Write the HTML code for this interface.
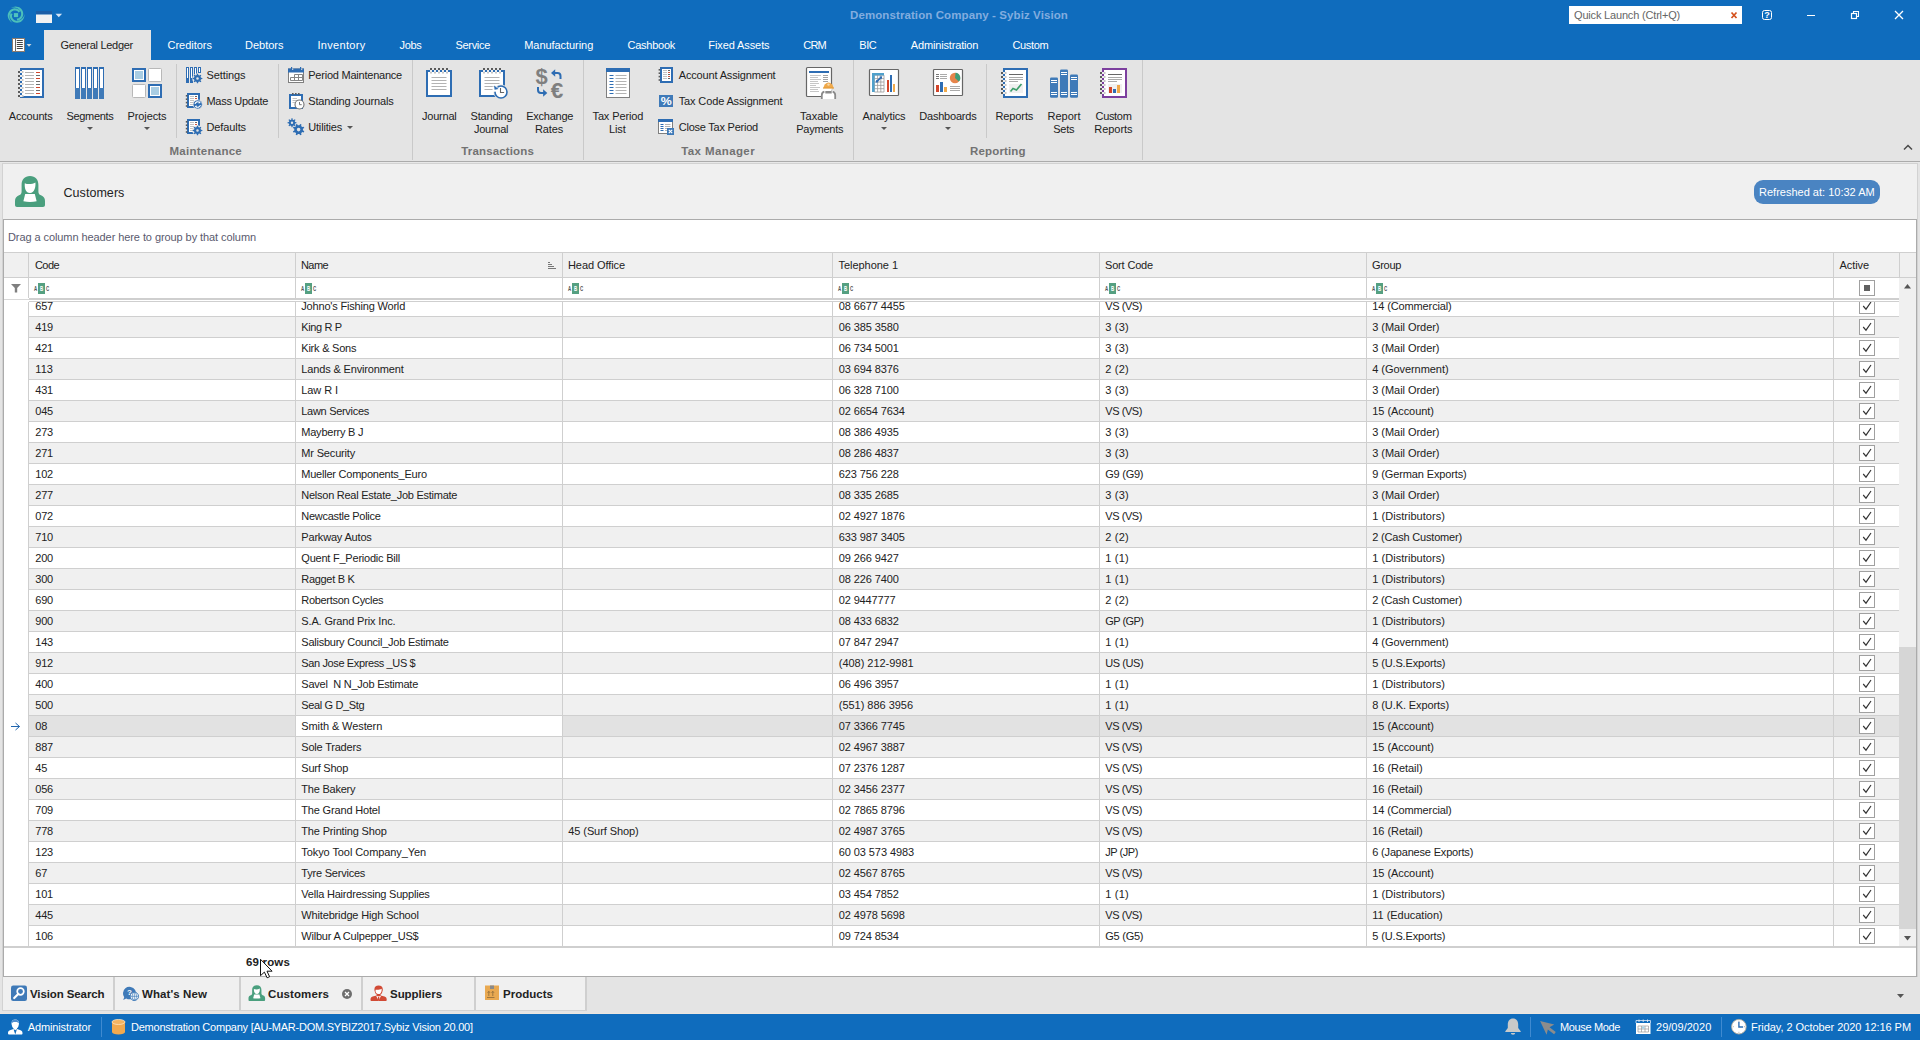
<!DOCTYPE html>
<html lang="en"><head><meta charset="utf-8"><title>Demonstration Company - Sybiz Vision</title>
<style>
html,body{margin:0;padding:0}
body{width:1920px;height:1040px;overflow:hidden;position:relative;background:#e4e4e4;font-family:'Liberation Sans', sans-serif;font-size:11px;line-height:14px;color:#222}
.a{position:absolute}
.t{position:absolute;white-space:pre;height:14px}
svg{position:absolute;overflow:visible}

</style></head><body>
<div class="a" style="left:0px;top:0px;width:1920px;height:60px;background:#0f6cbd;"></div>
<div class="a" style="left:44px;top:30px;width:107px;height:30px;background:#e4e4e4;"></div>
<div class="a" style="left:1569px;top:6px;width:173px;height:18px;background:#fff;"></div>
<div class="a" style="left:0px;top:60px;width:1920px;height:101px;background:#e4e4e4;"></div>
<div class="a" style="left:0px;top:161px;width:1920px;height:1px;background:#ababab;"></div>
<div class="a" style="left:0px;top:162px;width:1920px;height:1px;background:#e8e8e8;"></div>
<div class="a" style="left:412px;top:60px;width:1px;height:100px;background:#c9c9c9;"></div>
<div class="a" style="left:583px;top:60px;width:1px;height:100px;background:#c9c9c9;"></div>
<div class="a" style="left:853px;top:60px;width:1px;height:100px;background:#c9c9c9;"></div>
<div class="a" style="left:1142px;top:60px;width:1px;height:100px;background:#c9c9c9;"></div>
<div class="a" style="left:176px;top:64px;width:1px;height:74px;background:#c9c9c9;"></div>
<div class="a" style="left:278px;top:64px;width:1px;height:74px;background:#c9c9c9;"></div>
<div class="a" style="left:986px;top:64px;width:1px;height:74px;background:#c9c9c9;"></div>
<svg style="left:87px;top:127px" width="6" height="3" viewBox="0 0 6 3"><path d="M0 0h6L3 3z" fill="#555"/></svg>
<svg style="left:144px;top:127px" width="6" height="3" viewBox="0 0 6 3"><path d="M0 0h6L3 3z" fill="#555"/></svg>
<svg style="left:881px;top:127px" width="6" height="3" viewBox="0 0 6 3"><path d="M0 0h6L3 3z" fill="#555"/></svg>
<svg style="left:945px;top:127px" width="6" height="3" viewBox="0 0 6 3"><path d="M0 0h6L3 3z" fill="#555"/></svg>
<svg style="left:347px;top:126px" width="6" height="3" viewBox="0 0 6 3"><path d="M0 0h6L3 3z" fill="#555"/></svg>
<div class="a" style="left:2px;top:163px;width:1916px;height:814px;background:#f0f0f0;box-sizing:border-box;border:1px solid #d2d2d2;border-bottom:none;"></div>
<div class="a" style="left:1754px;top:180px;width:126px;height:24px;border-radius:9px;background:#4a84c2"></div>
<div class="a" style="left:3px;top:219px;width:1914px;height:758px;background:#fff;box-sizing:border-box;border:1px solid #ababab;"></div>
<div class="a" style="left:4px;top:252px;width:1912px;height:1px;background:#cfcfcf;"></div>
<div class="a" style="left:4px;top:253px;width:1912px;height:24px;background:#f0f0f0;"></div>
<div class="a" style="left:4px;top:277px;width:1912px;height:1px;background:#cfcfcf;"></div>
<div class="a" style="left:28px;top:253px;width:1px;height:24px;background:#cfcfcf;"></div>
<div class="a" style="left:295px;top:253px;width:1px;height:24px;background:#cfcfcf;"></div>
<div class="a" style="left:562px;top:253px;width:1px;height:24px;background:#cfcfcf;"></div>
<div class="a" style="left:832px;top:253px;width:1px;height:24px;background:#cfcfcf;"></div>
<div class="a" style="left:1099px;top:253px;width:1px;height:24px;background:#cfcfcf;"></div>
<div class="a" style="left:1366px;top:253px;width:1px;height:24px;background:#cfcfcf;"></div>
<div class="a" style="left:1833px;top:253px;width:1px;height:24px;background:#cfcfcf;"></div>
<div class="a" style="left:1899px;top:253px;width:1px;height:24px;background:#cfcfcf;"></div>
<div class="a" style="left:28px;top:278px;width:1px;height:20px;background:#cfcfcf;"></div>
<div class="a" style="left:295px;top:278px;width:1px;height:20px;background:#cfcfcf;"></div>
<div class="a" style="left:562px;top:278px;width:1px;height:20px;background:#cfcfcf;"></div>
<div class="a" style="left:832px;top:278px;width:1px;height:20px;background:#cfcfcf;"></div>
<div class="a" style="left:1099px;top:278px;width:1px;height:20px;background:#cfcfcf;"></div>
<div class="a" style="left:1366px;top:278px;width:1px;height:20px;background:#cfcfcf;"></div>
<div class="a" style="left:1833px;top:278px;width:1px;height:20px;background:#cfcfcf;"></div>
<div class="a" style="left:29px;top:298px;width:1870px;height:2px;background:#cfcfcf;"></div>
<div class="a" style="left:29px;top:301px;width:1870px;height:1px;background:#cfcfcf;"></div>
<div class="a" style="left:4px;top:299px;width:25px;height:1px;background:#d8d8d8;"></div>
<div class="a" style="left:29px;top:316px;width:1870px;height:1px;background:#cfcfcf;"></div>
<svg style="left:1859px;top:302px;overflow:hidden" width="16" height="12" viewBox="0 4 16 12"><rect x="0.5" y="0.5" width="15" height="15" fill="#fff" stroke="#a0a0a0"/><path d="M4.2 8l2.8 3.2 5-7.2" fill="none" stroke="#333" stroke-width="1.15"/></svg>
<div class="a" style="left:29px;top:317px;width:1870px;height:20px;background:#f0f0f0;"></div>
<div class="a" style="left:29px;top:337px;width:1870px;height:1px;background:#cfcfcf;"></div>
<svg style="left:1859px;top:319px" width="16" height="16" viewBox="0 0 16 16"><rect x="0.5" y="0.5" width="15" height="15" fill="#fff" stroke="#a0a0a0"/><path d="M4.2 8l2.8 3.2 5-7.2" fill="none" stroke="#333" stroke-width="1.15"/></svg>
<div class="a" style="left:29px;top:358px;width:1870px;height:1px;background:#cfcfcf;"></div>
<svg style="left:1859px;top:340px" width="16" height="16" viewBox="0 0 16 16"><rect x="0.5" y="0.5" width="15" height="15" fill="#fff" stroke="#a0a0a0"/><path d="M4.2 8l2.8 3.2 5-7.2" fill="none" stroke="#333" stroke-width="1.15"/></svg>
<div class="a" style="left:29px;top:359px;width:1870px;height:20px;background:#f0f0f0;"></div>
<div class="a" style="left:29px;top:379px;width:1870px;height:1px;background:#cfcfcf;"></div>
<svg style="left:1859px;top:361px" width="16" height="16" viewBox="0 0 16 16"><rect x="0.5" y="0.5" width="15" height="15" fill="#fff" stroke="#a0a0a0"/><path d="M4.2 8l2.8 3.2 5-7.2" fill="none" stroke="#333" stroke-width="1.15"/></svg>
<div class="a" style="left:29px;top:400px;width:1870px;height:1px;background:#cfcfcf;"></div>
<svg style="left:1859px;top:382px" width="16" height="16" viewBox="0 0 16 16"><rect x="0.5" y="0.5" width="15" height="15" fill="#fff" stroke="#a0a0a0"/><path d="M4.2 8l2.8 3.2 5-7.2" fill="none" stroke="#333" stroke-width="1.15"/></svg>
<div class="a" style="left:29px;top:401px;width:1870px;height:20px;background:#f0f0f0;"></div>
<div class="a" style="left:29px;top:421px;width:1870px;height:1px;background:#cfcfcf;"></div>
<svg style="left:1859px;top:403px" width="16" height="16" viewBox="0 0 16 16"><rect x="0.5" y="0.5" width="15" height="15" fill="#fff" stroke="#a0a0a0"/><path d="M4.2 8l2.8 3.2 5-7.2" fill="none" stroke="#333" stroke-width="1.15"/></svg>
<div class="a" style="left:29px;top:442px;width:1870px;height:1px;background:#cfcfcf;"></div>
<svg style="left:1859px;top:424px" width="16" height="16" viewBox="0 0 16 16"><rect x="0.5" y="0.5" width="15" height="15" fill="#fff" stroke="#a0a0a0"/><path d="M4.2 8l2.8 3.2 5-7.2" fill="none" stroke="#333" stroke-width="1.15"/></svg>
<div class="a" style="left:29px;top:443px;width:1870px;height:20px;background:#f0f0f0;"></div>
<div class="a" style="left:29px;top:463px;width:1870px;height:1px;background:#cfcfcf;"></div>
<svg style="left:1859px;top:445px" width="16" height="16" viewBox="0 0 16 16"><rect x="0.5" y="0.5" width="15" height="15" fill="#fff" stroke="#a0a0a0"/><path d="M4.2 8l2.8 3.2 5-7.2" fill="none" stroke="#333" stroke-width="1.15"/></svg>
<div class="a" style="left:29px;top:484px;width:1870px;height:1px;background:#cfcfcf;"></div>
<svg style="left:1859px;top:466px" width="16" height="16" viewBox="0 0 16 16"><rect x="0.5" y="0.5" width="15" height="15" fill="#fff" stroke="#a0a0a0"/><path d="M4.2 8l2.8 3.2 5-7.2" fill="none" stroke="#333" stroke-width="1.15"/></svg>
<div class="a" style="left:29px;top:485px;width:1870px;height:20px;background:#f0f0f0;"></div>
<div class="a" style="left:29px;top:505px;width:1870px;height:1px;background:#cfcfcf;"></div>
<svg style="left:1859px;top:487px" width="16" height="16" viewBox="0 0 16 16"><rect x="0.5" y="0.5" width="15" height="15" fill="#fff" stroke="#a0a0a0"/><path d="M4.2 8l2.8 3.2 5-7.2" fill="none" stroke="#333" stroke-width="1.15"/></svg>
<div class="a" style="left:29px;top:526px;width:1870px;height:1px;background:#cfcfcf;"></div>
<svg style="left:1859px;top:508px" width="16" height="16" viewBox="0 0 16 16"><rect x="0.5" y="0.5" width="15" height="15" fill="#fff" stroke="#a0a0a0"/><path d="M4.2 8l2.8 3.2 5-7.2" fill="none" stroke="#333" stroke-width="1.15"/></svg>
<div class="a" style="left:29px;top:527px;width:1870px;height:20px;background:#f0f0f0;"></div>
<div class="a" style="left:29px;top:547px;width:1870px;height:1px;background:#cfcfcf;"></div>
<svg style="left:1859px;top:529px" width="16" height="16" viewBox="0 0 16 16"><rect x="0.5" y="0.5" width="15" height="15" fill="#fff" stroke="#a0a0a0"/><path d="M4.2 8l2.8 3.2 5-7.2" fill="none" stroke="#333" stroke-width="1.15"/></svg>
<div class="a" style="left:29px;top:568px;width:1870px;height:1px;background:#cfcfcf;"></div>
<svg style="left:1859px;top:550px" width="16" height="16" viewBox="0 0 16 16"><rect x="0.5" y="0.5" width="15" height="15" fill="#fff" stroke="#a0a0a0"/><path d="M4.2 8l2.8 3.2 5-7.2" fill="none" stroke="#333" stroke-width="1.15"/></svg>
<div class="a" style="left:29px;top:569px;width:1870px;height:20px;background:#f0f0f0;"></div>
<div class="a" style="left:29px;top:589px;width:1870px;height:1px;background:#cfcfcf;"></div>
<svg style="left:1859px;top:571px" width="16" height="16" viewBox="0 0 16 16"><rect x="0.5" y="0.5" width="15" height="15" fill="#fff" stroke="#a0a0a0"/><path d="M4.2 8l2.8 3.2 5-7.2" fill="none" stroke="#333" stroke-width="1.15"/></svg>
<div class="a" style="left:29px;top:610px;width:1870px;height:1px;background:#cfcfcf;"></div>
<svg style="left:1859px;top:592px" width="16" height="16" viewBox="0 0 16 16"><rect x="0.5" y="0.5" width="15" height="15" fill="#fff" stroke="#a0a0a0"/><path d="M4.2 8l2.8 3.2 5-7.2" fill="none" stroke="#333" stroke-width="1.15"/></svg>
<div class="a" style="left:29px;top:611px;width:1870px;height:20px;background:#f0f0f0;"></div>
<div class="a" style="left:29px;top:631px;width:1870px;height:1px;background:#cfcfcf;"></div>
<svg style="left:1859px;top:613px" width="16" height="16" viewBox="0 0 16 16"><rect x="0.5" y="0.5" width="15" height="15" fill="#fff" stroke="#a0a0a0"/><path d="M4.2 8l2.8 3.2 5-7.2" fill="none" stroke="#333" stroke-width="1.15"/></svg>
<div class="a" style="left:29px;top:652px;width:1870px;height:1px;background:#cfcfcf;"></div>
<svg style="left:1859px;top:634px" width="16" height="16" viewBox="0 0 16 16"><rect x="0.5" y="0.5" width="15" height="15" fill="#fff" stroke="#a0a0a0"/><path d="M4.2 8l2.8 3.2 5-7.2" fill="none" stroke="#333" stroke-width="1.15"/></svg>
<div class="a" style="left:29px;top:653px;width:1870px;height:20px;background:#f0f0f0;"></div>
<div class="a" style="left:29px;top:673px;width:1870px;height:1px;background:#cfcfcf;"></div>
<svg style="left:1859px;top:655px" width="16" height="16" viewBox="0 0 16 16"><rect x="0.5" y="0.5" width="15" height="15" fill="#fff" stroke="#a0a0a0"/><path d="M4.2 8l2.8 3.2 5-7.2" fill="none" stroke="#333" stroke-width="1.15"/></svg>
<div class="a" style="left:29px;top:694px;width:1870px;height:1px;background:#cfcfcf;"></div>
<svg style="left:1859px;top:676px" width="16" height="16" viewBox="0 0 16 16"><rect x="0.5" y="0.5" width="15" height="15" fill="#fff" stroke="#a0a0a0"/><path d="M4.2 8l2.8 3.2 5-7.2" fill="none" stroke="#333" stroke-width="1.15"/></svg>
<div class="a" style="left:29px;top:695px;width:1870px;height:20px;background:#f0f0f0;"></div>
<div class="a" style="left:29px;top:715px;width:1870px;height:1px;background:#cfcfcf;"></div>
<svg style="left:1859px;top:697px" width="16" height="16" viewBox="0 0 16 16"><rect x="0.5" y="0.5" width="15" height="15" fill="#fff" stroke="#a0a0a0"/><path d="M4.2 8l2.8 3.2 5-7.2" fill="none" stroke="#333" stroke-width="1.15"/></svg>
<div class="a" style="left:29px;top:716px;width:1870px;height:20px;background:#e2e2e2;"></div>
<div class="a" style="left:296px;top:716px;width:266px;height:20px;background:#fff;"></div>
<div class="a" style="left:29px;top:736px;width:1870px;height:1px;background:#cfcfcf;"></div>
<svg style="left:1859px;top:718px" width="16" height="16" viewBox="0 0 16 16"><rect x="0.5" y="0.5" width="15" height="15" fill="#fff" stroke="#a0a0a0"/><path d="M4.2 8l2.8 3.2 5-7.2" fill="none" stroke="#333" stroke-width="1.15"/></svg>
<div class="a" style="left:29px;top:737px;width:1870px;height:20px;background:#f0f0f0;"></div>
<div class="a" style="left:29px;top:757px;width:1870px;height:1px;background:#cfcfcf;"></div>
<svg style="left:1859px;top:739px" width="16" height="16" viewBox="0 0 16 16"><rect x="0.5" y="0.5" width="15" height="15" fill="#fff" stroke="#a0a0a0"/><path d="M4.2 8l2.8 3.2 5-7.2" fill="none" stroke="#333" stroke-width="1.15"/></svg>
<div class="a" style="left:29px;top:778px;width:1870px;height:1px;background:#cfcfcf;"></div>
<svg style="left:1859px;top:760px" width="16" height="16" viewBox="0 0 16 16"><rect x="0.5" y="0.5" width="15" height="15" fill="#fff" stroke="#a0a0a0"/><path d="M4.2 8l2.8 3.2 5-7.2" fill="none" stroke="#333" stroke-width="1.15"/></svg>
<div class="a" style="left:29px;top:779px;width:1870px;height:20px;background:#f0f0f0;"></div>
<div class="a" style="left:29px;top:799px;width:1870px;height:1px;background:#cfcfcf;"></div>
<svg style="left:1859px;top:781px" width="16" height="16" viewBox="0 0 16 16"><rect x="0.5" y="0.5" width="15" height="15" fill="#fff" stroke="#a0a0a0"/><path d="M4.2 8l2.8 3.2 5-7.2" fill="none" stroke="#333" stroke-width="1.15"/></svg>
<div class="a" style="left:29px;top:820px;width:1870px;height:1px;background:#cfcfcf;"></div>
<svg style="left:1859px;top:802px" width="16" height="16" viewBox="0 0 16 16"><rect x="0.5" y="0.5" width="15" height="15" fill="#fff" stroke="#a0a0a0"/><path d="M4.2 8l2.8 3.2 5-7.2" fill="none" stroke="#333" stroke-width="1.15"/></svg>
<div class="a" style="left:29px;top:821px;width:1870px;height:20px;background:#f0f0f0;"></div>
<div class="a" style="left:29px;top:841px;width:1870px;height:1px;background:#cfcfcf;"></div>
<svg style="left:1859px;top:823px" width="16" height="16" viewBox="0 0 16 16"><rect x="0.5" y="0.5" width="15" height="15" fill="#fff" stroke="#a0a0a0"/><path d="M4.2 8l2.8 3.2 5-7.2" fill="none" stroke="#333" stroke-width="1.15"/></svg>
<div class="a" style="left:29px;top:862px;width:1870px;height:1px;background:#cfcfcf;"></div>
<svg style="left:1859px;top:844px" width="16" height="16" viewBox="0 0 16 16"><rect x="0.5" y="0.5" width="15" height="15" fill="#fff" stroke="#a0a0a0"/><path d="M4.2 8l2.8 3.2 5-7.2" fill="none" stroke="#333" stroke-width="1.15"/></svg>
<div class="a" style="left:29px;top:863px;width:1870px;height:20px;background:#f0f0f0;"></div>
<div class="a" style="left:29px;top:883px;width:1870px;height:1px;background:#cfcfcf;"></div>
<svg style="left:1859px;top:865px" width="16" height="16" viewBox="0 0 16 16"><rect x="0.5" y="0.5" width="15" height="15" fill="#fff" stroke="#a0a0a0"/><path d="M4.2 8l2.8 3.2 5-7.2" fill="none" stroke="#333" stroke-width="1.15"/></svg>
<div class="a" style="left:29px;top:904px;width:1870px;height:1px;background:#cfcfcf;"></div>
<svg style="left:1859px;top:886px" width="16" height="16" viewBox="0 0 16 16"><rect x="0.5" y="0.5" width="15" height="15" fill="#fff" stroke="#a0a0a0"/><path d="M4.2 8l2.8 3.2 5-7.2" fill="none" stroke="#333" stroke-width="1.15"/></svg>
<div class="a" style="left:29px;top:905px;width:1870px;height:20px;background:#f0f0f0;"></div>
<div class="a" style="left:29px;top:925px;width:1870px;height:1px;background:#cfcfcf;"></div>
<svg style="left:1859px;top:907px" width="16" height="16" viewBox="0 0 16 16"><rect x="0.5" y="0.5" width="15" height="15" fill="#fff" stroke="#a0a0a0"/><path d="M4.2 8l2.8 3.2 5-7.2" fill="none" stroke="#333" stroke-width="1.15"/></svg>
<div class="a" style="left:29px;top:946px;width:1870px;height:1px;background:#cfcfcf;"></div>
<svg style="left:1859px;top:928px" width="16" height="16" viewBox="0 0 16 16"><rect x="0.5" y="0.5" width="15" height="15" fill="#fff" stroke="#a0a0a0"/><path d="M4.2 8l2.8 3.2 5-7.2" fill="none" stroke="#333" stroke-width="1.15"/></svg>
<div class="a" style="left:28px;top:302px;width:1px;height:645px;background:#cfcfcf;"></div>
<div class="a" style="left:295px;top:302px;width:1px;height:645px;background:#cfcfcf;"></div>
<div class="a" style="left:562px;top:302px;width:1px;height:645px;background:#cfcfcf;"></div>
<div class="a" style="left:832px;top:302px;width:1px;height:645px;background:#cfcfcf;"></div>
<div class="a" style="left:1099px;top:302px;width:1px;height:645px;background:#cfcfcf;"></div>
<div class="a" style="left:1366px;top:302px;width:1px;height:645px;background:#cfcfcf;"></div>
<div class="a" style="left:1833px;top:302px;width:1px;height:645px;background:#cfcfcf;"></div>
<div class="a" style="left:4px;top:946px;width:1912px;height:2px;background:#cfcfcf;"></div>
<div class="a" style="left:1899px;top:278px;width:17px;height:668px;background:#f0f0f0;"></div>
<div class="a" style="left:1899px;top:647px;width:17px;height:282px;background:#d6d6d6;"></div>
<svg style="left:1904px;top:284px" width="7" height="5" viewBox="0 0 7 5"><path d="M0 4.500h7L3.5 0z" fill="#555"/></svg>
<svg style="left:1904px;top:936px" width="7" height="5" viewBox="0 0 7 5"><path d="M0 0h7L3.5 4.500z" fill="#555"/></svg>
<div class="a" style="left:2px;top:977px;width:585px;height:34px;background:#f0f0f0;box-sizing:border-box;border-left:1px solid #d2d2d2;border-bottom:1px solid #d2d2d2;"></div>
<div class="a" style="left:0px;top:1013px;width:1920px;height:1px;background:#ece6e0;"></div>
<div class="a" style="left:113px;top:977px;width:2px;height:33px;background:#cfcfcf;"></div>
<div class="a" style="left:239px;top:977px;width:2px;height:33px;background:#cfcfcf;"></div>
<div class="a" style="left:361px;top:977px;width:2px;height:33px;background:#cfcfcf;"></div>
<div class="a" style="left:474px;top:977px;width:2px;height:33px;background:#cfcfcf;"></div>
<div class="a" style="left:585px;top:977px;width:2px;height:33px;background:#cfcfcf;"></div>
<svg style="left:1897px;top:994px" width="7" height="4" viewBox="0 0 7 4"><path d="M0 0h7L3.5 4z" fill="#555"/></svg>
<div class="a" style="left:0px;top:1014px;width:1920px;height:26px;background:#0f6cbd;"></div>
<div class="a" style="left:101px;top:1017px;width:1px;height:20px;background:#3f8ad0;"></div>
<div class="a" style="left:1530px;top:1017px;width:1px;height:20px;background:#3f8ad0;"></div>
<div class="a" style="left:1721px;top:1017px;width:1px;height:20px;background:#3f8ad0;"></div>
<svg style="left:0;top:0" width="1920" height="1040" viewBox="0 0 1920 1040"><path d="M10.88 8.21L11.96 7.55L13.12 7.05L14.34 6.73L15.58 6.60L16.83 6.65L18.06 6.89L19.23 7.31L20.29 7.95L21.19 8.79L21.93 9.74L22.51 10.77L22.92 11.85L23.15 12.96L23.21 14.06L23.11 15.14L22.85 16.17L22.45 17.12L21.92 17.98L21.27 18.73L20.54 19.36L19.75 19.86L18.90 20.22L18.04 20.44L17.17 20.53L16.74 18.47L17.30 18.48L17.88 18.39L18.46 18.20L19.03 17.91L19.56 17.52L20.04 17.04L20.45 16.46L20.78 15.81L21.01 15.10L21.13 14.33L21.13 13.53L21.00 12.72L20.75 11.91L20.36 11.13L19.84 10.40L19.20 9.75L18.47 9.12L17.65 8.52L16.70 8.05L15.64 7.72L14.50 7.56L13.31 7.58L12.09 7.79L10.88 8.21Z" fill="#4cc0ba"/><path d="M24.44 13.96L24.47 15.23L24.32 16.48L23.99 17.69L23.48 18.84L22.81 19.90L21.99 20.84L21.04 21.64L19.96 22.24L18.78 22.59L17.59 22.76L16.41 22.75L15.27 22.57L14.20 22.22L13.21 21.72L12.32 21.09L11.56 20.35L10.94 19.52L10.46 18.63L10.13 17.70L9.95 16.75L9.92 15.81L10.03 14.90L10.27 14.04L10.63 13.25L12.62 13.90L12.34 14.39L12.13 14.94L12.00 15.54L11.97 16.17L12.04 16.82L12.22 17.48L12.51 18.12L12.90 18.73L13.41 19.29L14.01 19.78L14.70 20.18L15.47 20.47L16.30 20.65L17.17 20.71L18.06 20.62L18.95 20.40L19.86 20.08L20.79 19.66L21.67 19.08L22.49 18.33L23.19 17.42L23.77 16.38L24.19 15.22L24.44 13.96Z" fill="#4cc0ba"/><path d="M12.68 22.82L11.57 22.23L10.56 21.47L9.67 20.57L8.93 19.56L8.36 18.45L7.95 17.27L7.72 16.05L7.75 14.81L8.03 13.61L8.48 12.50L9.08 11.48L9.81 10.59L10.65 9.83L11.58 9.22L12.57 8.77L13.59 8.48L14.61 8.36L15.62 8.39L16.60 8.57L17.51 8.88L18.34 9.32L19.07 9.87L19.69 10.51L20.20 11.22L18.64 12.62L18.36 12.13L17.99 11.68L17.54 11.27L17.00 10.92L16.40 10.66L15.74 10.48L15.04 10.41L14.31 10.45L13.58 10.61L12.86 10.89L12.16 11.29L11.52 11.81L10.95 12.43L10.47 13.16L10.10 13.97L9.85 14.86L9.67 15.80L9.57 16.81L9.63 17.87L9.87 18.95L10.30 20.02L10.92 21.04L11.71 21.99L12.68 22.82Z" fill="#4cc0ba"/><rect x="13.9" y="13.1" width="4.2" height="4" fill="#50c3be" /><rect x="36" y="11" width="16" height="3.5" fill="#1c5ea6" /><rect x="36" y="14.5" width="16" height="8.5" fill="#f2f2f2" /><path d="M55.5 13.8h6.6l-3.3 3.4z" fill="#d3e3f5"/><rect x="12.5" y="38.5" width="12" height="13" fill="#fff" stroke="#8c7b6e"/><path d="M15.500 39v12" stroke="#666" stroke-width="1"/><path d="M16.8 40.5H22.8" stroke="#444" stroke-width="1"/><path d="M16.8 42.5H22.8" stroke="#444" stroke-width="1"/><path d="M16.8 44.5H22.8" stroke="#444" stroke-width="1"/><path d="M16.8 46.5H22.8" stroke="#444" stroke-width="1"/><path d="M16.8 48.5H22.8" stroke="#444" stroke-width="1"/><path d="M26.5 44h5l-2.5 2.8z" fill="#cfd6de"/><path d="M1731.5 12.5l5 5.5M1736.5 12.5l-5 5.5" stroke="#d4501c" stroke-width="1.7"/><rect x="1762.5" y="10.5" width="9" height="9" rx="2" fill="none" stroke="#fff"/><text x="1767" y="18.300" font-size="9" font-weight="bold" fill="#fff" text-anchor="middle" font-family="Liberation Sans, sans-serif">?</text><path d="M1807 15.5h8" stroke="#fff"/><path d="M1853.5 13v-1.500h5v5h-1.500" fill="none" stroke="#fff" stroke-width="1.100"/><rect x="1851.5" y="13.5" width="5" height="5" fill="none" stroke="#fff" stroke-width="1.2"/><path d="M1895 11l8 8M1903 11l-8 8" stroke="#fff" stroke-width="1.3"/><path d="M1904 149.500l4-4 4 4" fill="none" stroke="#4a4a4a" stroke-width="1.500"/><rect x="20" y="68" width="24" height="30" fill="#2e6db3" /><rect x="22" y="70" width="20" height="26" fill="#fff" /><rect x="20" y="71" width="2" height="2" fill="#ececec" /><rect x="18" y="71" width="2" height="2" fill="#5a5a5a" /><rect x="22" y="71" width="1.5" height="2" fill="#c4c4c4" /><rect x="20" y="75" width="2" height="2" fill="#ececec" /><rect x="18" y="75" width="2" height="2" fill="#5a5a5a" /><rect x="22" y="75" width="1.5" height="2" fill="#c4c4c4" /><rect x="20" y="79" width="2" height="2" fill="#ececec" /><rect x="18" y="79" width="2" height="2" fill="#5a5a5a" /><rect x="22" y="79" width="1.5" height="2" fill="#c4c4c4" /><rect x="20" y="83" width="2" height="2" fill="#ececec" /><rect x="18" y="83" width="2" height="2" fill="#5a5a5a" /><rect x="22" y="83" width="1.5" height="2" fill="#c4c4c4" /><rect x="20" y="87" width="2" height="2" fill="#ececec" /><rect x="18" y="87" width="2" height="2" fill="#5a5a5a" /><rect x="22" y="87" width="1.5" height="2" fill="#c4c4c4" /><rect x="20" y="91" width="2" height="2" fill="#ececec" /><rect x="18" y="91" width="2" height="2" fill="#5a5a5a" /><rect x="22" y="91" width="1.5" height="2" fill="#c4c4c4" /><rect x="20" y="95" width="2" height="2" fill="#ececec" /><rect x="18" y="95" width="2" height="2" fill="#5a5a5a" /><rect x="22" y="95" width="1.5" height="2" fill="#c4c4c4" /><path d="M25 72.5H34" stroke="#b3b3b3"/><path d="M36 72.5H40" stroke="#d2452a"/><path d="M25 75.5H34" stroke="#b3b3b3"/><path d="M36 75.5H40" stroke="#6e6e6e"/><path d="M25 78.5H34" stroke="#b3b3b3"/><path d="M36 78.5H40" stroke="#d2452a"/><path d="M25 81.5H34" stroke="#b3b3b3"/><path d="M36 81.5H40" stroke="#6e6e6e"/><path d="M25 84.5H34" stroke="#b3b3b3"/><path d="M36 84.5H40" stroke="#6e6e6e"/><path d="M25 87.5H34" stroke="#b3b3b3"/><path d="M36 87.5H40" stroke="#d2452a"/><path d="M25 90.5H34" stroke="#b3b3b3"/><path d="M36 90.5H40" stroke="#6e6e6e"/><path d="M25 93.5H34" stroke="#b3b3b3"/><path d="M36 93.5H40" stroke="#d2452a"/><rect x="75" y="67" width="5" height="32" fill="#2e6db3" /><rect x="75" y="88" width="5" height="11" fill="#3f7ab8" /><rect x="76" y="69" width="3" height="19" fill="#fff" /><rect x="81" y="67" width="5" height="32" fill="#2e6db3" /><rect x="81" y="88" width="5" height="11" fill="#3f7ab8" /><rect x="82" y="69" width="3" height="19" fill="#fff" /><rect x="87" y="67" width="5" height="32" fill="#2e6db3" /><rect x="87" y="88" width="5" height="11" fill="#3f7ab8" /><rect x="88" y="69" width="3" height="19" fill="#fff" /><rect x="93" y="67" width="5" height="32" fill="#2e6db3" /><rect x="93" y="88" width="5" height="11" fill="#3f7ab8" /><rect x="94" y="69" width="3" height="19" fill="#fff" /><rect x="99" y="67" width="5" height="32" fill="#2e6db3" /><rect x="99" y="88" width="5" height="11" fill="#3f7ab8" /><rect x="100" y="69" width="3" height="19" fill="#fff" /><rect x="132" y="68" width="14" height="14" fill="#2e6db3" /><rect x="134" y="70" width="10" height="10" fill="#fff" /><rect x="135" y="71" width="8" height="8" fill="#a9cde3" /><rect x="148.5" y="68.5" width="13" height="13" fill="#fff" stroke="#b8b8b8" rx="1"/><rect x="132.5" y="84.5" width="13" height="13" fill="#fff" stroke="#b8b8b8" rx="1"/><rect x="148" y="84" width="14" height="14" fill="#2e6db3" /><rect x="150" y="86" width="10" height="10" fill="#fff" /><rect x="151" y="87" width="8" height="8" fill="#a9cde3" /><rect x="186" y="67" width="3" height="16" fill="#2e6db3" /><rect x="187" y="68" width="1" height="10" fill="#fff" /><rect x="190" y="67" width="3" height="16" fill="#2e6db3" /><rect x="191" y="68" width="1" height="10" fill="#fff" /><rect x="194" y="67" width="3" height="8" fill="#2e6db3" /><rect x="195" y="68" width="1" height="6" fill="#fff" /><rect x="198" y="67" width="3" height="6" fill="#2e6db3" /><rect x="199" y="68" width="1" height="4" fill="#fff" /><circle cx="197.5" cy="78.5" r="5.3" fill="#e4e4e4"/><path d="M201.02 77.73L202.36 77.89L202.36 79.11L201.02 79.27L200.53 80.44L201.37 81.50L200.50 82.37L199.44 81.53L198.27 82.02L198.11 83.36L196.89 83.36L196.73 82.02L195.56 81.53L194.50 82.37L193.63 81.50L194.47 80.44L193.98 79.27L192.64 79.11L192.64 77.89L193.98 77.73L194.47 76.56L193.63 75.50L194.50 74.63L195.56 75.47L196.73 74.98L196.89 73.64L198.11 73.64L198.27 74.98L199.44 75.47L200.50 74.63L201.37 75.50L200.53 76.56ZM196.20 78.50a1.30 1.30 0 1 0 2.60 0a1.30 1.30 0 1 0 -2.60 0Z" fill="#2e6db3" fill-rule="evenodd"/><rect x="187" y="93" width="13" height="15" fill="#2e6db3" /><rect x="189" y="95" width="9" height="11" fill="#fff" /><rect x="185.8" y="95" width="1.6" height="1.6" fill="#5a5a5a" /><rect x="185.8" y="98.4" width="1.6" height="1.6" fill="#5a5a5a" /><rect x="185.8" y="101.8" width="1.6" height="1.6" fill="#5a5a5a" /><rect x="185.8" y="105.2" width="1.6" height="1.6" fill="#5a5a5a" /><path d="M190 96.5H194" stroke="#b3b3b3" stroke-width="0.8"/><path d="M195 96.5H197" stroke="#555" stroke-width="0.9"/><path d="M190 98.5H194" stroke="#b3b3b3" stroke-width="0.8"/><path d="M195 98.5H197" stroke="#d2452a" stroke-width="0.9"/><path d="M190 100.5H194" stroke="#b3b3b3" stroke-width="0.8"/><path d="M190 102.5H194" stroke="#b3b3b3" stroke-width="0.8"/><path d="M190 104.5H194" stroke="#b3b3b3" stroke-width="0.8"/><circle cx="197.7" cy="104.5" r="4.6" fill="#2e6db3" stroke="#e4e4e4" stroke-width="0.8"/><path d="M195 104a2.8 2.8 0 0 1 4.6-1.6M200.4 105a2.8 2.8 0 0 1-4.6 1.6" fill="none" stroke="#fff" stroke-width="1.1"/><path d="M199.2 101.2l1.6 1.9-2.3 0.4zM196.2 107.8l-1.6-1.9 2.3-0.4z" fill="#fff"/><rect x="187" y="119" width="13" height="15" fill="#2e6db3" /><rect x="189" y="121" width="9" height="11" fill="#fff" /><rect x="185.8" y="121" width="1.6" height="1.6" fill="#5a5a5a" /><rect x="185.8" y="124.4" width="1.6" height="1.6" fill="#5a5a5a" /><rect x="185.8" y="127.8" width="1.6" height="1.6" fill="#5a5a5a" /><rect x="185.8" y="131.2" width="1.6" height="1.6" fill="#5a5a5a" /><path d="M190 122.5H194" stroke="#b3b3b3" stroke-width="0.8"/><path d="M195 122.5H197" stroke="#555" stroke-width="0.9"/><path d="M190 124.5H194" stroke="#b3b3b3" stroke-width="0.8"/><path d="M195 124.5H197" stroke="#d2452a" stroke-width="0.9"/><path d="M190 126.5H194" stroke="#b3b3b3" stroke-width="0.8"/><path d="M190 128.5H194" stroke="#b3b3b3" stroke-width="0.8"/><path d="M190 130.5H194" stroke="#b3b3b3" stroke-width="0.8"/><circle cx="197.5" cy="130.5" r="5.2" fill="#e4e4e4"/><path d="M201.02 129.73L202.36 129.89L202.36 131.11L201.02 131.27L200.53 132.44L201.37 133.50L200.50 134.37L199.44 133.53L198.27 134.02L198.11 135.36L196.89 135.36L196.73 134.02L195.56 133.53L194.50 134.37L193.63 133.50L194.47 132.44L193.98 131.27L192.64 131.11L192.64 129.89L193.98 129.73L194.47 128.56L193.63 127.50L194.50 126.63L195.56 127.47L196.73 126.98L196.89 125.64L198.11 125.64L198.27 126.98L199.44 127.47L200.50 126.63L201.37 127.50L200.53 128.56ZM196.20 130.50a1.30 1.30 0 1 0 2.60 0a1.30 1.30 0 1 0 -2.60 0Z" fill="#2e6db3" fill-rule="evenodd"/><rect x="288.5" y="69" width="15" height="13.5" fill="#fff" stroke="#7f7f7f"/><rect x="288" y="68.5" width="16" height="4" fill="#2e6db3" /><rect x="291" y="67" width="1.2" height="3" fill="#2e6db3" /><rect x="300" y="67" width="1.2" height="3" fill="#2e6db3" /><rect x="292.2" y="68.5" width="1" height="1.5" fill="#e4e4e4" /><rect x="301.2" y="68.5" width="1" height="1.5" fill="#e4e4e4" /><path d="M294.500 74.500h8v6h-12v-3h12M294.500 74.500v6M298.500 74.500v6" fill="none" stroke="#858585" stroke-width="1"/><rect x="289" y="94" width="14" height="15" fill="#2e6db3" /><rect x="291" y="96" width="10" height="11" fill="#fff" /><rect x="292" y="93" width="1.6" height="1.6" fill="#5a5a5a" /><rect x="295" y="93" width="1.6" height="1.6" fill="#5a5a5a" /><rect x="298" y="93" width="1.6" height="1.6" fill="#5a5a5a" /><path d="M292.5 98.5H297" stroke="#b3b3b3" stroke-width="0.8"/><path d="M292.5 100.5H297" stroke="#b3b3b3" stroke-width="0.8"/><path d="M292.5 102.5H297" stroke="#b3b3b3" stroke-width="0.8"/><circle cx="299.500" cy="104.500" r="4.500" fill="#fff" stroke="#727272" stroke-width="1.100"/><path d="M299.5 102v2.7h2.2" fill="none" stroke="#666" stroke-width="0.9"/><path d="M295.13 122.11L296.46 122.24L296.46 123.36L295.13 123.49L294.70 124.53L295.56 125.56L294.76 126.36L293.73 125.50L292.69 125.93L292.56 127.26L291.44 127.26L291.31 125.93L290.27 125.50L289.24 126.36L288.44 125.56L289.30 124.53L288.87 123.49L287.54 123.36L287.54 122.24L288.87 122.11L289.30 121.07L288.44 120.04L289.24 119.24L290.27 120.10L291.31 119.67L291.44 118.34L292.56 118.34L292.69 119.67L293.73 120.10L294.76 119.24L295.56 120.04L294.70 121.07ZM290.80 122.80a1.20 1.20 0 1 0 2.40 0a1.20 1.20 0 1 0 -2.40 0Z" fill="#2e6db3" fill-rule="evenodd"/><path d="M302.93 130.36L304.30 131.14L303.73 132.51L302.22 132.11L301.13 133.20L301.54 134.72L300.17 135.29L299.39 133.93L297.84 133.93L297.06 135.30L295.69 134.73L296.09 133.22L295.00 132.13L293.48 132.54L292.91 131.17L294.27 130.39L294.27 128.84L292.90 128.06L293.47 126.69L294.98 127.09L296.07 126.00L295.66 124.48L297.03 123.91L297.81 125.27L299.36 125.27L300.14 123.90L301.51 124.47L301.11 125.98L302.20 127.07L303.72 126.66L304.29 128.03L302.93 128.81ZM296.80 129.60a1.80 1.80 0 1 0 3.60 0a1.80 1.80 0 1 0 -3.60 0Z" fill="#2e6db3" fill-rule="evenodd"/><rect x="426" y="70" width="26" height="27" fill="#2e6db3" /><rect x="428" y="72" width="22" height="23" fill="#fff" /><rect x="430" y="70" width="2" height="2" fill="#ececec" /><rect x="430" y="68" width="2" height="2" fill="#5a5a5a" /><rect x="430" y="72" width="2" height="1.5" fill="#c4c4c4" /><rect x="434" y="70" width="2" height="2" fill="#ececec" /><rect x="434" y="68" width="2" height="2" fill="#5a5a5a" /><rect x="434" y="72" width="2" height="1.5" fill="#c4c4c4" /><rect x="438" y="70" width="2" height="2" fill="#ececec" /><rect x="438" y="68" width="2" height="2" fill="#5a5a5a" /><rect x="438" y="72" width="2" height="1.5" fill="#c4c4c4" /><rect x="442" y="70" width="2" height="2" fill="#ececec" /><rect x="442" y="68" width="2" height="2" fill="#5a5a5a" /><rect x="442" y="72" width="2" height="1.5" fill="#c4c4c4" /><rect x="446" y="70" width="2" height="2" fill="#ececec" /><rect x="446" y="68" width="2" height="2" fill="#5a5a5a" /><rect x="446" y="72" width="2" height="1.5" fill="#c4c4c4" /><path d="M431.5 77.5H446.5" stroke="#b3b3b3" stroke-width="1"/><path d="M431.5 80.5H446.5" stroke="#b3b3b3" stroke-width="1"/><path d="M431.5 83.5H446.5" stroke="#b3b3b3" stroke-width="1"/><path d="M431.5 86.5H446.5" stroke="#b3b3b3" stroke-width="1"/><path d="M431.5 89.5H446.5" stroke="#b3b3b3" stroke-width="1"/><rect x="479" y="70" width="26" height="27" fill="#2e6db3" /><rect x="481" y="72" width="22" height="23" fill="#fff" /><rect x="483" y="70" width="2" height="2" fill="#ececec" /><rect x="483" y="68" width="2" height="2" fill="#5a5a5a" /><rect x="483" y="72" width="2" height="1.5" fill="#c4c4c4" /><rect x="487" y="70" width="2" height="2" fill="#ececec" /><rect x="487" y="68" width="2" height="2" fill="#5a5a5a" /><rect x="487" y="72" width="2" height="1.5" fill="#c4c4c4" /><rect x="491" y="70" width="2" height="2" fill="#ececec" /><rect x="491" y="68" width="2" height="2" fill="#5a5a5a" /><rect x="491" y="72" width="2" height="1.5" fill="#c4c4c4" /><rect x="495" y="70" width="2" height="2" fill="#ececec" /><rect x="495" y="68" width="2" height="2" fill="#5a5a5a" /><rect x="495" y="72" width="2" height="1.5" fill="#c4c4c4" /><rect x="499" y="70" width="2" height="2" fill="#ececec" /><rect x="499" y="68" width="2" height="2" fill="#5a5a5a" /><rect x="499" y="72" width="2" height="1.5" fill="#c4c4c4" /><path d="M484.5 77.5H499.5" stroke="#b3b3b3" stroke-width="1"/><path d="M484.5 80.5H499.5" stroke="#b3b3b3" stroke-width="1"/><path d="M484.5 83.5H499.5" stroke="#b3b3b3" stroke-width="1"/><path d="M484.5 86.5H499.5" stroke="#b3b3b3" stroke-width="1"/><path d="M484.5 89.5H499.5" stroke="#b3b3b3" stroke-width="1"/><circle cx="501" cy="92" r="7.6" fill="#e4e4e4"/><circle cx="501" cy="92" r="6" fill="#fff" stroke="#2e6db3" stroke-width="1.6"/><rect x="492.5" y="86.5" width="5" height="5.2" fill="#fff" /><path d="M494 85.5l0.6 4.2 4-0.8z" fill="#2e6db3"/><path d="M500.5 88v4.5h3.6" fill="none" stroke="#666" stroke-width="1.1"/><text x="541.5" y="84" font-size="22" font-weight="bold" fill="#7f7f7f" text-anchor="middle" font-family="Liberation Sans, sans-serif">$</text><text x="557" y="97.8" font-size="22.5" font-weight="bold" fill="#7f7f7f" text-anchor="middle" font-family="Liberation Sans, sans-serif">€</text><path d="M554 73h3.5a3 3 0 0 1 3 3v3" fill="none" stroke="#2e6db3" stroke-width="2"/><path d="M551 73l4.2-3.8v7.6z" fill="#2e6db3"/><path d="M538 87v3a3 3 0 0 0 3 3h3" fill="none" stroke="#2e6db3" stroke-width="2"/><path d="M547.3 93l-4.2-3.8v7.6z" fill="#2e6db3"/><rect x="606.5" y="68.5" width="23" height="29" fill="#fff" stroke="#7f7f7f"/><rect x="606" y="68" width="24" height="4" fill="#2e6db3" /><path d="M609.5 75.5H613.5" stroke="#2e6db3" stroke-width="1"/><path d="M609.5 78.5H613.5" stroke="#2e6db3" stroke-width="1"/><path d="M609.5 81.5H613.5" stroke="#2e6db3" stroke-width="1"/><path d="M609.5 84.5H613.5" stroke="#2e6db3" stroke-width="1"/><path d="M609.5 87.5H613.5" stroke="#2e6db3" stroke-width="1"/><path d="M609.5 90.5H613.5" stroke="#2e6db3" stroke-width="1"/><path d="M609.5 93.5H613.5" stroke="#2e6db3" stroke-width="1"/><path d="M615.5 75.5H626.5" stroke="#b3b3b3" stroke-width="1"/><path d="M615.5 78.5H626.5" stroke="#b3b3b3" stroke-width="1"/><path d="M615.5 81.5H626.5" stroke="#b3b3b3" stroke-width="1"/><path d="M615.5 84.5H626.5" stroke="#b3b3b3" stroke-width="1"/><path d="M615.5 87.5H626.5" stroke="#b3b3b3" stroke-width="1"/><path d="M615.5 90.5H626.5" stroke="#b3b3b3" stroke-width="1"/><path d="M615.5 93.5H626.5" stroke="#b3b3b3" stroke-width="1"/><rect x="660" y="67" width="13" height="16" fill="#2e6db3" /><rect x="662" y="69" width="9" height="12" fill="#fff" /><rect x="658.6" y="69" width="1.6" height="1.6" fill="#5a5a5a" /><rect x="658.6" y="72.4" width="1.6" height="1.6" fill="#5a5a5a" /><rect x="658.6" y="75.8" width="1.6" height="1.6" fill="#5a5a5a" /><rect x="658.6" y="79.2" width="1.6" height="1.6" fill="#5a5a5a" /><path d="M663 70.5H667" stroke="#b3b3b3" stroke-width="0.8"/><path d="M668 70.5H670" stroke="#555" stroke-width="0.9"/><path d="M663 72.5H667" stroke="#b3b3b3" stroke-width="0.8"/><path d="M668 72.5H670" stroke="#d2452a" stroke-width="0.9"/><path d="M663 74.5H667" stroke="#b3b3b3" stroke-width="0.8"/><path d="M668 74.5H670" stroke="#555" stroke-width="0.9"/><path d="M663 76.5H667" stroke="#b3b3b3" stroke-width="0.8"/><path d="M668 76.5H670" stroke="#d2452a" stroke-width="0.9"/><path d="M663 78.5H667" stroke="#b3b3b3" stroke-width="0.8"/><path d="M668 78.5H670" stroke="#555" stroke-width="0.9"/><rect x="659" y="95" width="14" height="12" fill="#3f7ab8" /><text x="660.800" y="105.400" font-size="11.500" font-weight="bold" fill="#fff" textLength="11" lengthAdjust="spacingAndGlyphs" font-family="Liberation Sans, sans-serif">%</text><rect x="658.5" y="119.5" width="14" height="14" fill="#fff" stroke="#7f7f7f"/><rect x="658" y="119" width="15" height="3" fill="#2e6db3" /><path d="M660.5 124.5H663.5" stroke="#2e6db3" stroke-width="1"/><path d="M660.5 126.5H663.5" stroke="#2e6db3" stroke-width="1"/><path d="M660.5 128.5H663.5" stroke="#2e6db3" stroke-width="1"/><path d="M660.5 130.5H663.5" stroke="#2e6db3" stroke-width="1"/><path d="M665 124.5H670.5" stroke="#b3b3b3" stroke-width="1"/><path d="M665 126.5H670.5" stroke="#b3b3b3" stroke-width="1"/><path d="M665 128.5H670.5" stroke="#b3b3b3" stroke-width="1"/><path d="M665 130.5H670.5" stroke="#b3b3b3" stroke-width="1"/><rect x="667" y="128" width="7" height="7" fill="#3f7ab8" /><path d="M668.8 129.8l3.4 3.4M672.2 129.8l-3.4 3.4" stroke="#fff" stroke-width="1.1"/><rect x="806.5" y="67.5" width="25" height="29" fill="#fff" stroke="#666" stroke-width="1.2" rx="1"/><rect x="809" y="71" width="20" height="2" fill="#2e6db3" /><path d="M810 75.5H821" stroke="#c0c0c0" stroke-width="0.9"/><path d="M810 77.5H818" stroke="#c0c0c0" stroke-width="0.9"/><path d="M810 79.5H821" stroke="#c0c0c0" stroke-width="0.9"/><path d="M810 81.5H818" stroke="#c0c0c0" stroke-width="0.9"/><path d="M810 83.5H819" stroke="#c0c0c0" stroke-width="0.9"/><path d="M810 85.5H816" stroke="#c0c0c0" stroke-width="0.9"/><path d="M810 87.5H820" stroke="#c0c0c0" stroke-width="0.9"/><path d="M810 89.5H818" stroke="#c0c0c0" stroke-width="0.9"/><path d="M810 91.5H819" stroke="#c0c0c0" stroke-width="0.9"/><path d="M823 75.5H828" stroke="#999" stroke-width="0.9"/><path d="M823 77.5H828" stroke="#999" stroke-width="0.9"/><path d="M823 79.5H828" stroke="#999" stroke-width="0.9"/><path d="M823 81.5H828" stroke="#999" stroke-width="0.9"/><path d="M821 99v-4.5a4 4 0 0 1 4-4h7a4 4 0 0 1 4 4v4.5z" fill="#fff"/><path d="M821.8 99v-4a3.5 3.5 0 0 1 2.6-3.4M835.2 99v-4a3.5 3.5 0 0 0-2.6-3.4" fill="none" stroke="#8a8a8a" stroke-width="1.8"/><circle cx="828.5" cy="88" r="3.6" fill="#fff"/><path d="M825.3 91h6.4v2.5h-6.4z" fill="#8a8a8a"/><path d="M823.6 88a4.9 5.4 0 0 1 9.8 0z" fill="#f0a94a"/><path d="M823 88h11" stroke="#e39a36" stroke-width="1.2"/><circle cx="828.5" cy="84.6" r="1.2" fill="#f7d9a8"/><rect x="869.5" y="69.5" width="29" height="26" fill="#fff" stroke="#666" stroke-width="1.2" rx="0.8"/><rect x="872" y="73" width="12" height="19" fill="#fff" /><path d="M874.4 75.200h9.600v16.800h-9.600zM877.600 75v17M880.800 75v17M874.400 78.600h9.600M874.400 82h9.600M874.400 85.400h9.600M874.400 88.700h9.600" fill="none" stroke="#9a9a9a" stroke-width="0.800"/><rect x="872" y="73" width="12" height="2.4" fill="#4fa0cb" /><rect x="872" y="73" width="2.6" height="19" fill="#4fa0cb" /><path d="M876.8 81.6l4.2-4.2" stroke="#2e6db3" stroke-width="1.6"/><path d="M882.2 76.2l-3 0.5 2.5 2.5zM875.6 82.8l3-0.5-2.5-2.5z" fill="#2e6db3"/><rect x="887" y="80" width="2" height="12" fill="#d2452a" /><rect x="890" y="75" width="2" height="17" fill="#2e6db3" /><rect x="893" y="84" width="2" height="8" fill="#f0a94a" /><rect x="933.5" y="69.5" width="29" height="26" fill="#fff" stroke="#666" stroke-width="1.2" rx="0.8"/><path d="M936 74.5H939" stroke="#777" stroke-width="1"/><path d="M936 76.5H939" stroke="#777" stroke-width="1"/><path d="M936 78.5H939" stroke="#777" stroke-width="1"/><path d="M940 74.5H947" stroke="#aaa" stroke-width="1"/><path d="M940 76.5H947" stroke="#aaa" stroke-width="1"/><path d="M940 78.5H947" stroke="#aaa" stroke-width="1"/><circle cx="955" cy="78" r="5.2" fill="#e6854c"/><path d="M955 78L955.6 72.8A5.2 5.2 0 0 1 958.8 81.6z" fill="#3d9e7a"/><rect x="936" y="85" width="3" height="7" fill="#d2452a" /><rect x="940" y="82" width="3" height="10" fill="#2e6db3" /><rect x="944" y="87" width="3" height="5" fill="#f0a94a" /><path d="M950 86.5H960" stroke="#aaa" stroke-width="1"/><path d="M950 88.5H960" stroke="#aaa" stroke-width="1"/><path d="M950 90.5H960" stroke="#aaa" stroke-width="1"/><rect x="1003" y="68" width="25" height="30" fill="#2e6db3" /><rect x="1005" y="70" width="21" height="26" fill="#fff" /><rect x="1003" y="72" width="2" height="2" fill="#ececec" /><rect x="1001" y="72" width="2" height="2" fill="#5a5a5a" /><rect x="1005" y="72" width="1.5" height="2" fill="#c4c4c4" /><rect x="1003" y="76" width="2" height="2" fill="#ececec" /><rect x="1001" y="76" width="2" height="2" fill="#5a5a5a" /><rect x="1005" y="76" width="1.5" height="2" fill="#c4c4c4" /><rect x="1003" y="80" width="2" height="2" fill="#ececec" /><rect x="1001" y="80" width="2" height="2" fill="#5a5a5a" /><rect x="1005" y="80" width="1.5" height="2" fill="#c4c4c4" /><rect x="1003" y="84" width="2" height="2" fill="#ececec" /><rect x="1001" y="84" width="2" height="2" fill="#5a5a5a" /><rect x="1005" y="84" width="1.5" height="2" fill="#c4c4c4" /><rect x="1003" y="88" width="2" height="2" fill="#ececec" /><rect x="1001" y="88" width="2" height="2" fill="#5a5a5a" /><rect x="1005" y="88" width="1.5" height="2" fill="#c4c4c4" /><rect x="1003" y="92" width="2" height="2" fill="#ececec" /><rect x="1001" y="92" width="2" height="2" fill="#5a5a5a" /><rect x="1005" y="92" width="1.5" height="2" fill="#c4c4c4" /><path d="M1009 74.5H1023" stroke="#666" stroke-width="1"/><path d="M1009 77.5H1023" stroke="#aaa" stroke-width="1"/><path d="M1009 79.5H1023" stroke="#aaa" stroke-width="1"/><path d="M1009 81.5H1018" stroke="#aaa" stroke-width="1"/><rect x="1009" y="84" width="14" height="9" fill="#f0f0f0" /><path d="M1010.5 91.5l2.5-3 3.5 1.5 5-6" fill="none" stroke="#3d9e6a" stroke-width="1.6"/><rect x="1050" y="77.5" width="8" height="20.3" rx="1.3" fill="#3f7ab8"/><path d="M1051 80.5H1057" stroke="#fff" stroke-width="1"/><path d="M1051 82.5H1057" stroke="#fff" stroke-width="1"/><path d="M1051 92.5H1057" stroke="#fff" stroke-width="1"/><path d="M1051 94.5H1057" stroke="#fff" stroke-width="1"/><rect x="1060" y="69.5" width="8" height="28.3" rx="1.3" fill="#3f7ab8"/><path d="M1061 72.5H1067" stroke="#fff" stroke-width="1"/><path d="M1061 74.5H1067" stroke="#fff" stroke-width="1"/><path d="M1061 92.5H1067" stroke="#fff" stroke-width="1"/><path d="M1061 94.5H1067" stroke="#fff" stroke-width="1"/><rect x="1070" y="74.5" width="8" height="23.3" rx="1.3" fill="#3f7ab8"/><path d="M1071 77.5H1077" stroke="#fff" stroke-width="1"/><path d="M1071 79.5H1077" stroke="#fff" stroke-width="1"/><path d="M1071 92.5H1077" stroke="#fff" stroke-width="1"/><path d="M1071 94.5H1077" stroke="#fff" stroke-width="1"/><rect x="1102" y="68" width="25" height="30" fill="#7c3f9e" /><rect x="1104" y="70" width="21" height="26" fill="#fff" /><rect x="1102" y="72" width="2" height="2" fill="#ececec" /><rect x="1100" y="72" width="2" height="2" fill="#5a5a5a" /><rect x="1104" y="72" width="1.5" height="2" fill="#c4c4c4" /><rect x="1102" y="76" width="2" height="2" fill="#ececec" /><rect x="1100" y="76" width="2" height="2" fill="#5a5a5a" /><rect x="1104" y="76" width="1.5" height="2" fill="#c4c4c4" /><rect x="1102" y="80" width="2" height="2" fill="#ececec" /><rect x="1100" y="80" width="2" height="2" fill="#5a5a5a" /><rect x="1104" y="80" width="1.5" height="2" fill="#c4c4c4" /><rect x="1102" y="84" width="2" height="2" fill="#ececec" /><rect x="1100" y="84" width="2" height="2" fill="#5a5a5a" /><rect x="1104" y="84" width="1.5" height="2" fill="#c4c4c4" /><rect x="1102" y="88" width="2" height="2" fill="#ececec" /><rect x="1100" y="88" width="2" height="2" fill="#5a5a5a" /><rect x="1104" y="88" width="1.5" height="2" fill="#c4c4c4" /><rect x="1102" y="92" width="2" height="2" fill="#ececec" /><rect x="1100" y="92" width="2" height="2" fill="#5a5a5a" /><rect x="1104" y="92" width="1.5" height="2" fill="#c4c4c4" /><path d="M1108 74.5H1122" stroke="#666" stroke-width="1"/><path d="M1108 77.5H1122" stroke="#aaa" stroke-width="1"/><path d="M1108 79.5H1122" stroke="#aaa" stroke-width="1"/><path d="M1108 81.5H1117" stroke="#aaa" stroke-width="1"/><rect x="1108" y="84" width="14" height="9" fill="#f0f0f0" /><rect x="1109" y="87" width="3" height="6" fill="#d2452a" /><rect x="1113" y="89" width="3" height="4" fill="#2e6db3" /><rect x="1117" y="85" width="3" height="8" fill="#f0a94a" /><g transform="translate(15 176) scale(1)"><path d="M15 0C9.6 0 6.6 3.6 6.6 9v6.5c0 2-0.8 3.2-2.6 3.8C1.4 20.2 0 22.2 0 25v4c0 1.2 0.8 2 2 2h26c1.2 0 2-0.8 2-2v-4c0-2.8-1.400-4.8-4-5.700-1.800-0.600-2.600-1.800-2.600-3.800V9C23.400 3.600 20.400 0 15 0z" fill="#4a9f7e"/><path d="M9.8 7.2c2.600 1.400 7.600 1.200 10.600-0.800 0.500 4.800-1.200 10.600-5.400 10.600S9.300 12 9.800 7.200z" fill="#fff"/><path d="M10.2 18h9.600l1.800 7.200c-4 1-9 1-13.200 0z" fill="#fff"/></g><path d="M548 262.500h2M548 264.500h4M548 266.500h6M548 268.500h8" stroke="#777" stroke-width="1" fill="none"/><path d="M11 284h10l-3.8 4v4.500h-2.400V288z" fill="#7f7f7f"/><rect x="38" y="283" width="7" height="11" fill="#55a081" /><text x="33.9" y="291.1" font-family="Liberation Sans, sans-serif" font-weight="bold" font-size="7.4" textLength="3.2" lengthAdjust="spacingAndGlyphs" fill="#555">A</text><text x="39.9" y="291.1" font-family="Liberation Sans, sans-serif" font-weight="bold" font-size="7.4" textLength="3.2" lengthAdjust="spacingAndGlyphs" fill="#fff">B</text><text x="45.9" y="291.1" font-family="Liberation Sans, sans-serif" font-weight="bold" font-size="7.4" textLength="3.2" lengthAdjust="spacingAndGlyphs" fill="#555">C</text><rect x="305" y="283" width="7" height="11" fill="#55a081" /><text x="300.9" y="291.1" font-family="Liberation Sans, sans-serif" font-weight="bold" font-size="7.4" textLength="3.2" lengthAdjust="spacingAndGlyphs" fill="#555">A</text><text x="306.9" y="291.1" font-family="Liberation Sans, sans-serif" font-weight="bold" font-size="7.4" textLength="3.2" lengthAdjust="spacingAndGlyphs" fill="#fff">B</text><text x="312.9" y="291.1" font-family="Liberation Sans, sans-serif" font-weight="bold" font-size="7.4" textLength="3.2" lengthAdjust="spacingAndGlyphs" fill="#555">C</text><rect x="572" y="283" width="7" height="11" fill="#55a081" /><text x="567.9" y="291.1" font-family="Liberation Sans, sans-serif" font-weight="bold" font-size="7.4" textLength="3.2" lengthAdjust="spacingAndGlyphs" fill="#555">A</text><text x="573.9" y="291.1" font-family="Liberation Sans, sans-serif" font-weight="bold" font-size="7.4" textLength="3.2" lengthAdjust="spacingAndGlyphs" fill="#fff">B</text><text x="579.9" y="291.1" font-family="Liberation Sans, sans-serif" font-weight="bold" font-size="7.4" textLength="3.2" lengthAdjust="spacingAndGlyphs" fill="#555">C</text><rect x="842" y="283" width="7" height="11" fill="#55a081" /><text x="837.9" y="291.1" font-family="Liberation Sans, sans-serif" font-weight="bold" font-size="7.4" textLength="3.2" lengthAdjust="spacingAndGlyphs" fill="#555">A</text><text x="843.9" y="291.1" font-family="Liberation Sans, sans-serif" font-weight="bold" font-size="7.4" textLength="3.2" lengthAdjust="spacingAndGlyphs" fill="#fff">B</text><text x="849.9" y="291.1" font-family="Liberation Sans, sans-serif" font-weight="bold" font-size="7.4" textLength="3.2" lengthAdjust="spacingAndGlyphs" fill="#555">C</text><rect x="1109" y="283" width="7" height="11" fill="#55a081" /><text x="1104.9" y="291.1" font-family="Liberation Sans, sans-serif" font-weight="bold" font-size="7.4" textLength="3.2" lengthAdjust="spacingAndGlyphs" fill="#555">A</text><text x="1110.9" y="291.1" font-family="Liberation Sans, sans-serif" font-weight="bold" font-size="7.4" textLength="3.2" lengthAdjust="spacingAndGlyphs" fill="#fff">B</text><text x="1116.9" y="291.1" font-family="Liberation Sans, sans-serif" font-weight="bold" font-size="7.4" textLength="3.2" lengthAdjust="spacingAndGlyphs" fill="#555">C</text><rect x="1376" y="283" width="7" height="11" fill="#55a081" /><text x="1371.9" y="291.1" font-family="Liberation Sans, sans-serif" font-weight="bold" font-size="7.4" textLength="3.2" lengthAdjust="spacingAndGlyphs" fill="#555">A</text><text x="1377.9" y="291.1" font-family="Liberation Sans, sans-serif" font-weight="bold" font-size="7.4" textLength="3.2" lengthAdjust="spacingAndGlyphs" fill="#fff">B</text><text x="1383.9" y="291.1" font-family="Liberation Sans, sans-serif" font-weight="bold" font-size="7.4" textLength="3.2" lengthAdjust="spacingAndGlyphs" fill="#555">C</text><rect x="1859.5" y="280.5" width="15" height="15" fill="#fff" stroke="#a0a0a0"/><rect x="1864" y="285" width="6" height="6" fill="#606060" /><path d="M11 726.500h8.500M15.500 723l4 3.500-4 3.500" fill="none" stroke="#1f64ad" stroke-width="1"/><rect x="11" y="985.5" width="16" height="15.5" rx="2.2" fill="#3f7ab8"/><circle cx="20.500" cy="991.500" r="3.300" fill="none" stroke="#fff" stroke-width="1.700"/><path d="M18.200 994l-4 4" stroke="#fff" stroke-width="2.200" stroke-linecap="round"/><path d="M123 993a6.500 6.200 0 1 1 3.200 5.400l-3 1.600 1-2.800A6.200 6.200 0 0 1 123 993z" fill="#3f7ab8"/><text x="129.500" y="994.500" font-size="8" font-weight="bold" fill="#fff" text-anchor="middle" font-family="Liberation Sans, sans-serif">?</text><circle cx="134.300" cy="996.300" r="4.200" fill="#fff" stroke="#3f7ab8" stroke-width="1"/><path d="M130.300 996.300h8M134.300 992.300v8M134.300 992.300a2.200 4 0 0 0 0 8a2.200 4 0 0 0 0-8" fill="none" stroke="#3f7ab8" stroke-width="0.700"/><g transform="translate(248.5 985.3) scale(0.553 0.51)"><path d="M15 0C9.6 0 6.6 3.6 6.6 9v6.5c0 2-0.8 3.2-2.6 3.8C1.4 20.2 0 22.2 0 25v4c0 1.2 0.8 2 2 2h26c1.2 0 2-0.8 2-2v-4c0-2.8-1.400-4.8-4-5.700-1.800-0.600-2.600-1.800-2.600-3.800V9C23.400 3.600 20.400 0 15 0z" fill="#4a9f7e"/><path d="M9.8 7.2c2.600 1.400 7.600 1.200 10.600-0.800 0.500 4.800-1.200 10.600-5.400 10.600S9.300 12 9.800 7.200z" fill="#fff"/><path d="M10.2 18h9.600l1.800 7.200c-4 1-9 1-13.200 0z" fill="#fff"/></g><circle cx="347" cy="994" r="5" fill="#6e6e6e"/><path d="M345 992l4 4M349 992l-4 4" stroke="#fff" stroke-width="1.300"/><g transform="translate(370.500 985.500) scale(0.540 0.500)"><path d="M15 0c-5 0-7.800 3.200-7.800 8 0 1.200 0.200 2.400 0.600 3.400l0.800 3c0.400 1.600 1.400 3 2.800 3.800v1.600L4 22.200C1.400 23.200 0 25.200 0 27.800V29c0 1.200 0.800 2 2 2h26c1.200 0 2-0.800 2-2v-1.200c0-2.600-1.400-4.600-4-5.600l-7.400-2.400v-1.600c1.400-0.800 2.400-2.200 2.800-3.800l0.800-3c0.400-1 0.600-2.200 0.600-3.400 0-4.800-2.800-8-7.800-8z" fill="#d14a35"/><path d="M9.400 8.400c3 0.600 8.400 0.200 11.200-2 0.600 4.600-1 10.800-5.600 10.800S8.800 13 9.400 8.400z" fill="#fff"/><path d="M10.500 20.500L15 31l4.500-10.500-2.500 0.800h-4z" fill="#fff"/><path d="M14 22.500h2l1 6-2 2.500-2-2.500z" fill="#d14a35"/></g><rect x="485" y="985.5" width="14" height="14.5" fill="#e9a951" /><rect x="490" y="985.5" width="4" height="3.5" fill="#8a8a8a" /><path d="M488.800 996v-4.500M487.600 992.800l1.200-1.500 1.200 1.500M492.800 996v-4.500M491.600 992.800l1.200-1.500 1.200 1.500M487 997.500h7.500" fill="none" stroke="#8a6a3a" stroke-width="0.800"/><g transform="translate(8 1019.500) scale(0.483)"><path d="M15 0c-5 0-7.800 3.200-7.800 8 0 1.200 0.200 2.400 0.600 3.400l0.800 3c0.400 1.600 1.400 3 2.800 3.800v1.600L4 22.200C1.400 23.200 0 25.200 0 27.800V29c0 1.200 0.800 2 2 2h26c1.200 0 2-0.800 2-2v-1.200c0-2.600-1.400-4.600-4-5.600l-7.400-2.400v-1.600c1.400-0.800 2.400-2.200 2.800-3.800l0.800-3c0.400-1 0.600-2.200 0.600-3.400 0-4.800-2.800-8-7.800-8z" fill="#fff"/><path d="M7.500 8.500c-0.600-5 2-8.500 7.500-8.500s8.100 3.500 7.500 8.500c-1-2.500-2.500-3.500-7.500-3.500s-6.500 1-7.500 3.500z" fill="#4f8fd0"/><path d="M12 19.500l3 3 3-3v2L15 31l-3-9.500z" fill="#0f6cbd"/></g><path d="M112 1022v10a6.500 2.500 0 0 0 13 0v-10z" fill="#f0a94f"/><ellipse cx="118.500" cy="1022" rx="6.500" ry="2.500" fill="#f3b462" stroke="#fbe3c0" stroke-width="0.800"/><path d="M1513 1018.500c-3.300 0-5.200 2.600-5.200 6v3.500l-2.500 3.200v0.800h15.400v-0.800l-2.500-3.200v-3.500c0-3.400-1.900-6-5.200-6z" fill="#c9c9c9"/><path d="M1510.800 1033a2.200 1.800 0 0 0 4.400 0z" fill="#c9c9c9"/><path d="M1541 1020l13.500 5.500-5 2 5.500 5.500-2 2-5.500-5.500-2 5z" fill="#8c8c8c" transform="rotate(-8 1548 1027)"/><rect x="1636" y="1023" width="14.5" height="11" fill="#fff" /><path d="M1636 1023v-2.500h14.500v2.500" fill="none" stroke="#dfe9f5" stroke-width="0.800"/><path d="M1639 1019.500v2.500M1643.200 1019.500v2.500M1647.500 1019.500v2.500" stroke="#dfe9f5" stroke-width="0.900"/><path d="M1638 1026h10.500v6h-10.500zM1638 1029h10.500M1641.500 1026v6M1645 1026v6" fill="none" stroke="#9a9a9a" stroke-width="0.700"/><rect x="1642" y="1026.5" width="2.6" height="2.2" fill="#a8d4e8" /><circle cx="1738.900" cy="1026.700" r="7.300" fill="#fff" stroke="#b9ae9c" stroke-width="0.900"/><path d="M1738.900 1021.800v5.200h4.200" fill="none" stroke="#2e6db3" stroke-width="1.400"/><path d="M1738.900 1020.600v1M1738.900 1031.800v1M1732.800 1026.700h1M1744 1026.700h1" stroke="#aaa" stroke-width="0.900"/></svg>
<span class="t" style="left:850.00px;top:7.52px;font-size:11.5px;line-height:15px;font-weight:bold;color:#82addf;letter-spacing:0.097px;">Demonstration Company - Sybiz Vision</span>
<span class="t" style="left:1574.00px;top:8.19px;color:#666;letter-spacing:-0.178px;">Quick Launch (Ctrl+Q)</span>
<span class="t" style="left:60.50px;top:38.19px;letter-spacing:-0.282px;">General Ledger</span>
<span class="t" style="left:167.50px;top:38.19px;color:#fff;letter-spacing:-0.014px;">Creditors</span>
<span class="t" style="left:245.00px;top:38.19px;color:#fff;">Debtors</span>
<span class="t" style="left:317.50px;top:38.19px;color:#fff;letter-spacing:0.306px;">Inventory</span>
<span class="t" style="left:399.50px;top:38.19px;color:#fff;letter-spacing:-0.312px;">Jobs</span>
<span class="t" style="left:455.50px;top:38.19px;color:#fff;letter-spacing:-0.312px;">Service</span>
<span class="t" style="left:524.25px;top:38.19px;color:#fff;letter-spacing:-0.055px;">Manufacturing</span>
<span class="t" style="left:627.50px;top:38.19px;color:#fff;letter-spacing:-0.256px;">Cashbook</span>
<span class="t" style="left:708.25px;top:38.19px;color:#fff;letter-spacing:-0.092px;">Fixed Assets</span>
<span class="t" style="left:803.25px;top:38.19px;color:#fff;letter-spacing:-0.800px;">CRM</span>
<span class="t" style="left:859.25px;top:38.19px;color:#fff;letter-spacing:-0.448px;">BIC</span>
<span class="t" style="left:910.75px;top:38.19px;color:#fff;letter-spacing:-0.157px;">Administration</span>
<span class="t" style="left:1012.50px;top:38.19px;color:#fff;letter-spacing:-0.359px;">Custom</span>
<span class="t" style="left:169.50px;top:143.52px;font-size:11.5px;line-height:15px;font-weight:bold;color:#727272;letter-spacing:0.257px;">Maintenance</span>
<span class="t" style="left:461.25px;top:143.52px;font-size:11.5px;line-height:15px;font-weight:bold;color:#727272;letter-spacing:0.150px;">Transactions</span>
<span class="t" style="left:681.25px;top:143.52px;font-size:11.5px;line-height:15px;font-weight:bold;color:#727272;letter-spacing:0.391px;">Tax Manager</span>
<span class="t" style="left:970.00px;top:143.52px;font-size:11.5px;line-height:15px;font-weight:bold;color:#727272;letter-spacing:0.160px;">Reporting</span>
<span class="t" style="left:8.75px;top:109.19px;letter-spacing:-0.188px;">Accounts</span>
<span class="t" style="left:66.50px;top:109.19px;letter-spacing:-0.316px;">Segments</span>
<span class="t" style="left:127.50px;top:109.19px;letter-spacing:-0.094px;">Projects</span>
<span class="t" style="left:422.00px;top:109.19px;letter-spacing:-0.225px;">Journal</span>
<span class="t" style="left:470.50px;top:109.19px;letter-spacing:-0.180px;">Standing</span>
<span class="t" style="left:474.00px;top:122.19px;letter-spacing:-0.261px;">Journal</span>
<span class="t" style="left:526.25px;top:109.19px;letter-spacing:-0.242px;">Exchange</span>
<span class="t" style="left:535.00px;top:122.19px;letter-spacing:-0.100px;">Rates</span>
<span class="t" style="left:592.50px;top:109.19px;letter-spacing:-0.123px;">Tax Period</span>
<span class="t" style="left:609.00px;top:122.19px;letter-spacing:-0.094px;">List</span>
<span class="t" style="left:800.00px;top:109.19px;letter-spacing:0.011px;">Taxable</span>
<span class="t" style="left:796.25px;top:122.19px;letter-spacing:-0.240px;">Payments</span>
<span class="t" style="left:862.50px;top:109.19px;letter-spacing:-0.115px;">Analytics</span>
<span class="t" style="left:919.25px;top:109.19px;letter-spacing:-0.208px;">Dashboards</span>
<span class="t" style="left:995.50px;top:109.19px;letter-spacing:-0.112px;">Reports</span>
<span class="t" style="left:1047.50px;top:109.19px;letter-spacing:-0.005px;">Report</span>
<span class="t" style="left:1053.25px;top:122.19px;letter-spacing:-0.254px;">Sets</span>
<span class="t" style="left:1095.50px;top:109.19px;letter-spacing:-0.318px;">Custom</span>
<span class="t" style="left:1094.25px;top:122.19px;letter-spacing:-0.040px;">Reports</span>
<span class="t" style="left:206.50px;top:68.19px;letter-spacing:-0.094px;">Settings</span>
<span class="t" style="left:206.50px;top:94.19px;letter-spacing:-0.301px;">Mass Update</span>
<span class="t" style="left:206.50px;top:120.19px;letter-spacing:-0.107px;">Defaults</span>
<span class="t" style="left:308.25px;top:68.19px;letter-spacing:-0.227px;">Period Maintenance</span>
<span class="t" style="left:308.25px;top:94.19px;letter-spacing:-0.165px;">Standing Journals</span>
<span class="t" style="left:308.25px;top:120.19px;letter-spacing:-0.189px;">Utilities</span>
<span class="t" style="left:678.75px;top:68.19px;letter-spacing:-0.162px;">Account Assignment</span>
<span class="t" style="left:678.75px;top:94.19px;letter-spacing:-0.139px;">Tax Code Assignment</span>
<span class="t" style="left:678.75px;top:120.19px;letter-spacing:-0.231px;">Close Tax Period</span>
<span class="t" style="left:63.50px;top:184.67px;font-size:12.5px;line-height:16px;letter-spacing:0.051px;">Customers</span>
<span class="t" style="left:1759.00px;top:185.19px;color:#fff;letter-spacing:0.006px;">Refreshed at: 10:32 AM</span>
<span class="t" style="left:8.00px;top:230.19px;color:#5a5a6e;letter-spacing:-0.080px;">Drag a column header here to group by that column</span>
<span class="t" style="left:35.00px;top:258.19px;letter-spacing:-0.574px;">Code</span>
<span class="t" style="left:301.00px;top:258.19px;letter-spacing:-0.586px;">Name</span>
<span class="t" style="left:568.00px;top:258.19px;letter-spacing:-0.081px;">Head Office</span>
<span class="t" style="left:838.50px;top:258.19px;letter-spacing:-0.041px;">Telephone 1</span>
<span class="t" style="left:1105.00px;top:258.19px;letter-spacing:-0.170px;">Sort Code</span>
<span class="t" style="left:1372.00px;top:258.19px;letter-spacing:-0.316px;">Group</span>
<span class="t" style="left:1839.50px;top:258.19px;letter-spacing:-0.078px;">Active</span>
<span class="t" style="left:35.30px;top:299.19px;letter-spacing:-0.205px;">657</span>
<span class="t" style="left:301.30px;top:299.19px;letter-spacing:-0.186px;">Johno's Fishing World</span>
<span class="t" style="left:838.80px;top:299.19px;letter-spacing:-0.115px;">08 6677 4455</span>
<span class="t" style="left:1105.30px;top:299.19px;letter-spacing:-0.431px;">VS (VS)</span>
<span class="t" style="left:1372.30px;top:299.19px;letter-spacing:-0.129px;">14 (Commercial)</span>
<span class="t" style="left:35.30px;top:320.19px;letter-spacing:-0.205px;">419</span>
<span class="t" style="left:301.30px;top:320.19px;letter-spacing:-0.390px;">King R P</span>
<span class="t" style="left:838.80px;top:320.19px;letter-spacing:-0.106px;">06 385 3580</span>
<span class="t" style="left:1105.30px;top:320.19px;letter-spacing:0.177px;">3 (3)</span>
<span class="t" style="left:1372.30px;top:320.19px;letter-spacing:-0.050px;">3 (Mail Order)</span>
<span class="t" style="left:35.30px;top:341.19px;letter-spacing:-0.205px;">421</span>
<span class="t" style="left:301.30px;top:341.19px;letter-spacing:-0.228px;">Kirk &amp; Sons</span>
<span class="t" style="left:838.80px;top:341.19px;letter-spacing:-0.106px;">06 734 5001</span>
<span class="t" style="left:1105.30px;top:341.19px;letter-spacing:0.177px;">3 (3)</span>
<span class="t" style="left:1372.30px;top:341.19px;letter-spacing:-0.050px;">3 (Mail Order)</span>
<span class="t" style="left:35.30px;top:362.19px;letter-spacing:0.066px;">113</span>
<span class="t" style="left:301.30px;top:362.19px;letter-spacing:-0.151px;">Lands &amp; Environment</span>
<span class="t" style="left:838.80px;top:362.19px;letter-spacing:-0.106px;">03 694 8376</span>
<span class="t" style="left:1105.30px;top:362.19px;letter-spacing:0.177px;">2 (2)</span>
<span class="t" style="left:1372.30px;top:362.19px;letter-spacing:-0.058px;">4 (Government)</span>
<span class="t" style="left:35.30px;top:383.19px;letter-spacing:-0.205px;">431</span>
<span class="t" style="left:301.30px;top:383.19px;letter-spacing:-0.089px;">Law R I</span>
<span class="t" style="left:838.80px;top:383.19px;letter-spacing:-0.106px;">06 328 7100</span>
<span class="t" style="left:1105.30px;top:383.19px;letter-spacing:0.177px;">3 (3)</span>
<span class="t" style="left:1372.30px;top:383.19px;letter-spacing:-0.050px;">3 (Mail Order)</span>
<span class="t" style="left:35.30px;top:404.19px;letter-spacing:-0.205px;">045</span>
<span class="t" style="left:301.30px;top:404.19px;letter-spacing:-0.302px;">Lawn Services</span>
<span class="t" style="left:838.80px;top:404.19px;letter-spacing:-0.115px;">02 6654 7634</span>
<span class="t" style="left:1105.30px;top:404.19px;letter-spacing:-0.431px;">VS (VS)</span>
<span class="t" style="left:1372.30px;top:404.19px;letter-spacing:-0.067px;">15 (Account)</span>
<span class="t" style="left:35.30px;top:425.19px;letter-spacing:-0.205px;">273</span>
<span class="t" style="left:301.30px;top:425.19px;letter-spacing:-0.233px;">Mayberry B J</span>
<span class="t" style="left:838.80px;top:425.19px;letter-spacing:-0.106px;">08 386 4935</span>
<span class="t" style="left:1105.30px;top:425.19px;letter-spacing:0.177px;">3 (3)</span>
<span class="t" style="left:1372.30px;top:425.19px;letter-spacing:-0.050px;">3 (Mail Order)</span>
<span class="t" style="left:35.30px;top:446.19px;letter-spacing:-0.205px;">271</span>
<span class="t" style="left:301.30px;top:446.19px;letter-spacing:-0.165px;">Mr Security</span>
<span class="t" style="left:838.80px;top:446.19px;letter-spacing:-0.106px;">08 286 4837</span>
<span class="t" style="left:1105.30px;top:446.19px;letter-spacing:0.177px;">3 (3)</span>
<span class="t" style="left:1372.30px;top:446.19px;letter-spacing:-0.050px;">3 (Mail Order)</span>
<span class="t" style="left:35.30px;top:467.19px;letter-spacing:-0.205px;">102</span>
<span class="t" style="left:301.30px;top:467.19px;letter-spacing:-0.234px;">Mueller Components_Euro</span>
<span class="t" style="left:838.80px;top:467.19px;letter-spacing:-0.106px;">623 756 228</span>
<span class="t" style="left:1105.30px;top:467.19px;letter-spacing:-0.253px;">G9 (G9)</span>
<span class="t" style="left:1372.30px;top:467.19px;letter-spacing:-0.124px;">9 (German Exports)</span>
<span class="t" style="left:35.30px;top:488.19px;letter-spacing:-0.205px;">277</span>
<span class="t" style="left:301.30px;top:488.19px;letter-spacing:-0.257px;">Nelson Real Estate_Job Estimate</span>
<span class="t" style="left:838.80px;top:488.19px;letter-spacing:-0.106px;">08 335 2685</span>
<span class="t" style="left:1105.30px;top:488.19px;letter-spacing:0.177px;">3 (3)</span>
<span class="t" style="left:1372.30px;top:488.19px;letter-spacing:-0.050px;">3 (Mail Order)</span>
<span class="t" style="left:35.30px;top:509.19px;letter-spacing:-0.205px;">072</span>
<span class="t" style="left:301.30px;top:509.19px;letter-spacing:-0.284px;">Newcastle Police</span>
<span class="t" style="left:838.80px;top:509.19px;letter-spacing:-0.115px;">02 4927 1876</span>
<span class="t" style="left:1105.30px;top:509.19px;letter-spacing:-0.431px;">VS (VS)</span>
<span class="t" style="left:1372.30px;top:509.19px;letter-spacing:0.027px;">1 (Distributors)</span>
<span class="t" style="left:35.30px;top:530.19px;letter-spacing:-0.205px;">710</span>
<span class="t" style="left:301.30px;top:530.19px;letter-spacing:-0.187px;">Parkway Autos</span>
<span class="t" style="left:838.80px;top:530.19px;letter-spacing:-0.115px;">633 987 3405</span>
<span class="t" style="left:1105.30px;top:530.19px;letter-spacing:0.177px;">2 (2)</span>
<span class="t" style="left:1372.30px;top:530.19px;letter-spacing:-0.191px;">2 (Cash Customer)</span>
<span class="t" style="left:35.30px;top:551.19px;letter-spacing:-0.205px;">200</span>
<span class="t" style="left:301.30px;top:551.19px;letter-spacing:-0.223px;">Quent F_Periodic Bill</span>
<span class="t" style="left:838.80px;top:551.19px;letter-spacing:-0.106px;">09 266 9427</span>
<span class="t" style="left:1105.30px;top:551.19px;letter-spacing:0.177px;">1 (1)</span>
<span class="t" style="left:1372.30px;top:551.19px;letter-spacing:0.027px;">1 (Distributors)</span>
<span class="t" style="left:35.30px;top:572.19px;letter-spacing:-0.205px;">300</span>
<span class="t" style="left:301.30px;top:572.19px;letter-spacing:-0.306px;">Ragget B K</span>
<span class="t" style="left:838.80px;top:572.19px;letter-spacing:-0.106px;">08 226 7400</span>
<span class="t" style="left:1105.30px;top:572.19px;letter-spacing:0.177px;">1 (1)</span>
<span class="t" style="left:1372.30px;top:572.19px;letter-spacing:0.027px;">1 (Distributors)</span>
<span class="t" style="left:35.30px;top:593.19px;letter-spacing:-0.205px;">690</span>
<span class="t" style="left:301.30px;top:593.19px;letter-spacing:-0.307px;">Robertson Cycles</span>
<span class="t" style="left:838.80px;top:593.19px;letter-spacing:-0.151px;">02 9447777</span>
<span class="t" style="left:1105.30px;top:593.19px;letter-spacing:0.177px;">2 (2)</span>
<span class="t" style="left:1372.30px;top:593.19px;letter-spacing:-0.191px;">2 (Cash Customer)</span>
<span class="t" style="left:35.30px;top:614.19px;letter-spacing:-0.205px;">900</span>
<span class="t" style="left:301.30px;top:614.19px;letter-spacing:-0.151px;">S.A. Grand Prix Inc.</span>
<span class="t" style="left:838.80px;top:614.19px;letter-spacing:-0.106px;">08 433 6832</span>
<span class="t" style="left:1105.30px;top:614.19px;letter-spacing:-0.556px;">GP (GP)</span>
<span class="t" style="left:1372.30px;top:614.19px;letter-spacing:0.027px;">1 (Distributors)</span>
<span class="t" style="left:35.30px;top:635.19px;letter-spacing:-0.205px;">143</span>
<span class="t" style="left:301.30px;top:635.19px;letter-spacing:-0.241px;">Salisbury Council_Job Estimate</span>
<span class="t" style="left:838.80px;top:635.19px;letter-spacing:-0.106px;">07 847 2947</span>
<span class="t" style="left:1105.30px;top:635.19px;letter-spacing:0.177px;">1 (1)</span>
<span class="t" style="left:1372.30px;top:635.19px;letter-spacing:-0.058px;">4 (Government)</span>
<span class="t" style="left:35.30px;top:656.19px;letter-spacing:-0.205px;">912</span>
<span class="t" style="left:301.30px;top:656.19px;letter-spacing:-0.378px;">San Jose Express _US $</span>
<span class="t" style="left:838.80px;top:656.19px;letter-spacing:-0.034px;">(408) 212-9981</span>
<span class="t" style="left:1105.30px;top:656.19px;letter-spacing:-0.427px;">US (US)</span>
<span class="t" style="left:1372.30px;top:656.19px;letter-spacing:-0.145px;">5 (U.S.Exports)</span>
<span class="t" style="left:35.30px;top:677.19px;letter-spacing:-0.205px;">400</span>
<span class="t" style="left:301.30px;top:677.19px;letter-spacing:-0.241px;">Savel  N N_Job Estimate</span>
<span class="t" style="left:838.80px;top:677.19px;letter-spacing:-0.106px;">06 496 3957</span>
<span class="t" style="left:1105.30px;top:677.19px;letter-spacing:0.177px;">1 (1)</span>
<span class="t" style="left:1372.30px;top:677.19px;letter-spacing:0.027px;">1 (Distributors)</span>
<span class="t" style="left:35.30px;top:698.19px;letter-spacing:-0.205px;">500</span>
<span class="t" style="left:301.30px;top:698.19px;letter-spacing:-0.369px;">Seal G D_Stg</span>
<span class="t" style="left:838.80px;top:698.19px;letter-spacing:-0.029px;">(551) 886 3956</span>
<span class="t" style="left:1105.30px;top:698.19px;letter-spacing:0.177px;">1 (1)</span>
<span class="t" style="left:1372.30px;top:698.19px;letter-spacing:-0.099px;">8 (U.K. Exports)</span>
<span class="t" style="left:35.30px;top:719.19px;letter-spacing:-0.210px;">08</span>
<span class="t" style="left:301.30px;top:719.19px;letter-spacing:-0.094px;">Smith &amp; Western</span>
<span class="t" style="left:838.80px;top:719.19px;letter-spacing:-0.115px;">07 3366 7745</span>
<span class="t" style="left:1105.30px;top:719.19px;letter-spacing:-0.431px;">VS (VS)</span>
<span class="t" style="left:1372.30px;top:719.19px;letter-spacing:-0.067px;">15 (Account)</span>
<span class="t" style="left:35.30px;top:740.19px;letter-spacing:-0.205px;">887</span>
<span class="t" style="left:301.30px;top:740.19px;letter-spacing:-0.207px;">Sole Traders</span>
<span class="t" style="left:838.80px;top:740.19px;letter-spacing:-0.115px;">02 4967 3887</span>
<span class="t" style="left:1105.30px;top:740.19px;letter-spacing:-0.431px;">VS (VS)</span>
<span class="t" style="left:1372.30px;top:740.19px;letter-spacing:-0.067px;">15 (Account)</span>
<span class="t" style="left:35.30px;top:761.19px;letter-spacing:-0.210px;">45</span>
<span class="t" style="left:301.30px;top:761.19px;letter-spacing:-0.243px;">Surf Shop</span>
<span class="t" style="left:838.80px;top:761.19px;letter-spacing:-0.115px;">07 2376 1287</span>
<span class="t" style="left:1105.30px;top:761.19px;letter-spacing:-0.431px;">VS (VS)</span>
<span class="t" style="left:1372.30px;top:761.19px;letter-spacing:-0.049px;">16 (Retail)</span>
<span class="t" style="left:35.30px;top:782.19px;letter-spacing:-0.205px;">056</span>
<span class="t" style="left:301.30px;top:782.19px;letter-spacing:-0.227px;">The Bakery</span>
<span class="t" style="left:838.80px;top:782.19px;letter-spacing:-0.115px;">02 3456 2377</span>
<span class="t" style="left:1105.30px;top:782.19px;letter-spacing:-0.431px;">VS (VS)</span>
<span class="t" style="left:1372.30px;top:782.19px;letter-spacing:-0.049px;">16 (Retail)</span>
<span class="t" style="left:35.30px;top:803.19px;letter-spacing:-0.205px;">709</span>
<span class="t" style="left:301.30px;top:803.19px;letter-spacing:-0.173px;">The Grand Hotel</span>
<span class="t" style="left:838.80px;top:803.19px;letter-spacing:-0.115px;">02 7865 8796</span>
<span class="t" style="left:1105.30px;top:803.19px;letter-spacing:-0.431px;">VS (VS)</span>
<span class="t" style="left:1372.30px;top:803.19px;letter-spacing:-0.129px;">14 (Commercial)</span>
<span class="t" style="left:35.30px;top:824.19px;letter-spacing:-0.205px;">778</span>
<span class="t" style="left:301.30px;top:824.19px;letter-spacing:-0.160px;">The Printing Shop</span>
<span class="t" style="left:568.30px;top:824.19px;letter-spacing:-0.093px;">45 (Surf Shop)</span>
<span class="t" style="left:838.80px;top:824.19px;letter-spacing:-0.115px;">02 4987 3765</span>
<span class="t" style="left:1105.30px;top:824.19px;letter-spacing:-0.431px;">VS (VS)</span>
<span class="t" style="left:1372.30px;top:824.19px;letter-spacing:-0.049px;">16 (Retail)</span>
<span class="t" style="left:35.30px;top:845.19px;letter-spacing:-0.205px;">123</span>
<span class="t" style="left:301.30px;top:845.19px;letter-spacing:-0.081px;">Tokyo Tool Company_Yen</span>
<span class="t" style="left:838.80px;top:845.19px;letter-spacing:-0.089px;">60 03 573 4983</span>
<span class="t" style="left:1105.30px;top:845.19px;letter-spacing:-0.457px;">JP (JP)</span>
<span class="t" style="left:1372.30px;top:845.19px;letter-spacing:-0.185px;">6 (Japanese Exports)</span>
<span class="t" style="left:35.30px;top:866.19px;letter-spacing:-0.210px;">67</span>
<span class="t" style="left:301.30px;top:866.19px;letter-spacing:-0.216px;">Tyre Services</span>
<span class="t" style="left:838.80px;top:866.19px;letter-spacing:-0.115px;">02 4567 8765</span>
<span class="t" style="left:1105.30px;top:866.19px;letter-spacing:-0.431px;">VS (VS)</span>
<span class="t" style="left:1372.30px;top:866.19px;letter-spacing:-0.067px;">15 (Account)</span>
<span class="t" style="left:35.30px;top:887.19px;letter-spacing:-0.205px;">101</span>
<span class="t" style="left:301.30px;top:887.19px;letter-spacing:-0.207px;">Vella Hairdressing Supplies</span>
<span class="t" style="left:838.80px;top:887.19px;letter-spacing:-0.106px;">03 454 7852</span>
<span class="t" style="left:1105.30px;top:887.19px;letter-spacing:0.177px;">1 (1)</span>
<span class="t" style="left:1372.30px;top:887.19px;letter-spacing:0.027px;">1 (Distributors)</span>
<span class="t" style="left:35.30px;top:908.19px;letter-spacing:-0.205px;">445</span>
<span class="t" style="left:301.30px;top:908.19px;letter-spacing:-0.153px;">Whitebridge High School</span>
<span class="t" style="left:838.80px;top:908.19px;letter-spacing:-0.115px;">02 4978 5698</span>
<span class="t" style="left:1105.30px;top:908.19px;letter-spacing:-0.431px;">VS (VS)</span>
<span class="t" style="left:1372.30px;top:908.19px;letter-spacing:-0.030px;">11 (Education)</span>
<span class="t" style="left:35.30px;top:929.19px;letter-spacing:-0.205px;">106</span>
<span class="t" style="left:301.30px;top:929.19px;letter-spacing:-0.205px;">Wilbur A Culpepper_US$</span>
<span class="t" style="left:838.80px;top:929.19px;letter-spacing:-0.106px;">09 724 8534</span>
<span class="t" style="left:1105.30px;top:929.19px;letter-spacing:-0.253px;">G5 (G5)</span>
<span class="t" style="left:1372.30px;top:929.19px;letter-spacing:-0.145px;">5 (U.S.Exports)</span>
<span class="t" style="left:246.00px;top:954.52px;font-size:11.5px;line-height:15px;font-weight:bold;letter-spacing:0.167px;">69 rows</span>
<span class="t" style="left:30.00px;top:986.52px;font-size:11.5px;line-height:15px;font-weight:bold;letter-spacing:-0.105px;">Vision Search</span>
<span class="t" style="left:142.00px;top:986.52px;font-size:11.5px;line-height:15px;font-weight:bold;letter-spacing:0.092px;">What's New</span>
<span class="t" style="left:268.00px;top:986.52px;font-size:11.5px;line-height:15px;font-weight:bold;letter-spacing:0.102px;">Customers</span>
<span class="t" style="left:390.00px;top:986.52px;font-size:11.5px;line-height:15px;font-weight:bold;letter-spacing:-0.045px;">Suppliers</span>
<span class="t" style="left:503.00px;top:986.52px;font-size:11.5px;line-height:15px;font-weight:bold;letter-spacing:0.020px;">Products</span>
<span class="t" style="left:27.70px;top:1020.19px;color:#fff;letter-spacing:-0.115px;">Administrator</span>
<span class="t" style="left:131.00px;top:1020.19px;color:#fff;letter-spacing:-0.230px;">Demonstration Company [AU-MAR-DOM.SYBIZ2017.Sybiz Vision 20.00]</span>
<span class="t" style="left:1560.00px;top:1020.19px;color:#fff;letter-spacing:-0.359px;">Mouse Mode</span>
<span class="t" style="left:1656.00px;top:1020.19px;color:#fff;letter-spacing:0.024px;">29/09/2020</span>
<span class="t" style="left:1751.00px;top:1020.19px;color:#fff;letter-spacing:-0.059px;">Friday, 2 October 2020 12:16 PM</span>
<svg style="left:0;top:0" width="1920" height="1040" viewBox="0 0 1920 1040"><path d="M260.500 959.300v16.400l3.900-3.600 2.700 5.700 2.500-1.100-2.600-5.500h5.100z" fill="#fff" stroke="#111" stroke-width="1" stroke-linejoin="miter"/></svg>
</body></html>
